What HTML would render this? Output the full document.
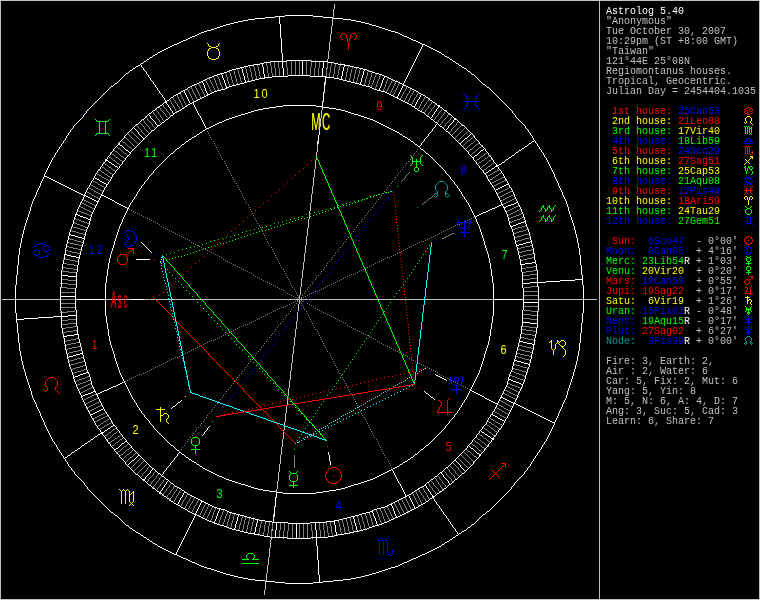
<!DOCTYPE html>
<html lang="en"><head><meta charset="utf-8"><title>Astrolog 5.40</title>
<style>
html,body{margin:0;padding:0;background:#000;}
body{width:760px;height:600px;position:relative;overflow:hidden;}
svg{position:absolute;left:0;top:0;will-change:transform;}
svg path{fill:none;stroke-width:1;shape-rendering:crispEdges;}
.hn{font-family:"Liberation Sans",sans-serif;font-size:12.5px;text-anchor:middle;letter-spacing:2px;}
.lb{font-family:"Liberation Sans",sans-serif;font-size:23.6px;stroke-width:0.15px;vector-effect:non-scaling-stroke;}
pre{position:absolute;left:606px;top:7px;margin:0;font-family:"Liberation Mono",monospace;font-size:10px;line-height:10px;color:#c0c0c0;white-space:pre;will-change:transform;}
</style></head><body>
<svg width="760" height="600" viewBox="0 0 760 600">
<path stroke="#c0c0c0" d="M2 299.5h13M16 299.5h44M106 299.5h25M144 299.5h5M150 299.5h5M156 299.5h15M172 299.5h23M196 299.5h5M202 299.5h97M300 299.5h8M309 299.5h68M378 299.5h14M393 299.5h31M425 299.5h68M539 299.5h44M584 299.5h13M327 59.5h1M327 60.5h1M326 68.5h1M324 92.5h1M322 101.5h1M317 151.5h1M316 158.5h1M316 159.5h1M287 397.5h1M283 430.5h1M276 497.5h1M274 506.5h1M272 529.5h1M272 530.5h1M271 538.5h1M271 539.5h1M1 0.5h598M600 0.5h159M1 599.5h598M600 599.5h159M264.5 590v5M265.5 582v8M266.5 573v8M267.5 565v8M268.5 557v8M269.5 548v9M270.5 540v8M273.5 514v3M276.5 489v3M277.5 481v8M278.5 472v9M279.5 464v8M280.5 455v9M281.5 447v8M282.5 439v8M283.5 432v7M284.5 422v3M284.5 426v4M285.5 413v9M286.5 406v7M287.5 399v6M288.5 388v8M289.5 380v8M290.5 371v9M291.5 363v8M292.5 354v9M293.5 346v8M294.5 337v9M295.5 329v8M296.5 321v8M297.5 312v9M298.5 304v7M300.5 287v8M301.5 278v9M302.5 270v8M303.5 262v8M304.5 253v9M305.5 245v8M306.5 236v9M307.5 228v8M309.5 211v8M310.5 203v8M311.5 194v9M312.5 186v8M313.5 177v9M314.5 169v8M315.5 160v9M316.5 152v4M317.5 145v5M318.5 141v3M319.5 127v5M320.5 118v9M321.5 110v8M322.5 107v3M325.5 82v3M328.5 51v8M329.5 42v9M330.5 34v8M331.5 26v8M332.5 18v8M333.5 9v8M334.5 4v5M308.5 219v9M299.5 295v4M299.5 300v4M0.5 0v600M599.5 0v600M759.5 0v600"/>
<path stroke="#ffffff" d="M76 299.5h29M131 299.5h13M494 299.5h29M265 17.5h10M323 17.5h10M144 61.5h2M270 61.5h12M283 61.5h4M311 61.5h12M324 61.5h4M414 61.5h1M453 61.5h2M144 537.5h2M184 537.5h1M270 537.5h5M276 537.5h11M311 537.5h5M317 537.5h11M453 537.5h2M265 581.5h10M323 581.5h10M102 95.5h1M162 95.5h1M174 95.5h2M186 95.5h1M206 95.5h1M391 95.5h2M398 95.5h1M420 95.5h1M423 95.5h2M496 95.5h1M103 94.5h1M161 94.5h1M176 94.5h2M185 94.5h1M208 94.5h2M389 94.5h2M398 94.5h1M421 94.5h2M495 94.5h1M104 93.5h1M160 93.5h1M178 93.5h2M185 93.5h1M210 93.5h2M387 93.5h2M399 93.5h1M419 93.5h2M494 93.5h1M105 92.5h1M159 92.5h1M180 92.5h1M206 92.5h1M212 92.5h2M385 92.5h2M399 92.5h1M418 92.5h1M493 92.5h1M106 91.5h1M159 91.5h1M181 91.5h2M206 91.5h1M214 91.5h3M381 91.5h4M400 91.5h1M416 91.5h2M492 91.5h1M107 90.5h1M158 90.5h1M183 90.5h1M217 90.5h4M377 90.5h2M380 90.5h1M400 90.5h1M414 90.5h2M491 90.5h1M108 89.5h1M157 89.5h1M185 89.5h2M221 89.5h4M374 89.5h3M401 89.5h1M412 89.5h2M490 89.5h1M109 88.5h1M157 88.5h1M187 88.5h1M225 88.5h1M372 88.5h2M401 88.5h1M410 88.5h2M489 88.5h1M110 87.5h1M156 87.5h1M188 87.5h2M227 87.5h2M370 87.5h2M380 87.5h1M402 87.5h1M408 87.5h2M487 87.5h2M111 86.5h2M155 86.5h1M190 86.5h2M229 86.5h3M366 86.5h4M380 86.5h1M402 86.5h1M406 86.5h2M486 86.5h1M117 82.5h1M153 82.5h1M199 82.5h2M202 82.5h1M244 82.5h1M246 82.5h1M351 82.5h4M398 82.5h2M404 82.5h1M481 82.5h1M118 81.5h1M152 81.5h1M201 81.5h2M247 81.5h4M347 81.5h4M395 81.5h3M404 81.5h1M480 81.5h1M120 79.5h1M150 79.5h1M205 79.5h2M223 79.5h1M255 79.5h4M339 79.5h2M342 79.5h1M383 79.5h1M391 79.5h2M405 79.5h1M478 79.5h1M122 77.5h1M149 77.5h1M209 77.5h3M265 77.5h7M326 77.5h8M384 77.5h1M387 77.5h2M406 77.5h1M476 77.5h1M121 78.5h1M150 78.5h1M207 78.5h2M223 78.5h1M259 78.5h5M334 78.5h5M383 78.5h1M389 78.5h2M406 78.5h1M477 78.5h1M123 76.5h1M148 76.5h1M212 76.5h2M272 76.5h11M284 76.5h4M310 76.5h12M323 76.5h2M384 76.5h3M407 76.5h1M475 76.5h1M125 74.5h1M147 74.5h1M217 74.5h3M221 74.5h1M379 74.5h3M408 74.5h1M472 74.5h2M126 73.5h2M146 73.5h1M220 73.5h4M375 73.5h4M408 73.5h1M471 73.5h1M128 72.5h1M146 72.5h1M224 72.5h3M372 72.5h3M409 72.5h1M470 72.5h1M130 70.5h2M144 70.5h1M229 70.5h3M364 70.5h1M367 70.5h2M410 70.5h1M467 70.5h1M132 69.5h1M143 69.5h1M232 69.5h4M363 69.5h4M410 69.5h1M466 69.5h1M133 68.5h2M143 68.5h1M236 68.5h4M241 68.5h1M359 68.5h4M411 68.5h1M464 68.5h2M135 67.5h1M142 67.5h1M240 67.5h4M354 67.5h5M411 67.5h1M462 67.5h2M136 66.5h2M141 66.5h1M244 66.5h4M350 66.5h4M412 66.5h1M461 66.5h1M138 65.5h2M141 65.5h1M248 65.5h6M345 65.5h5M412 65.5h1M459 65.5h2M140 64.5h1M254 64.5h6M338 64.5h6M413 64.5h1M458 64.5h1M141 63.5h2M260 63.5h2M263 63.5h1M334 63.5h4M413 63.5h1M456 63.5h2M143 62.5h1M264 62.5h6M328 62.5h6M414 62.5h1M455 62.5h1M146 60.5h1M287 60.5h15M303 60.5h8M415 60.5h1M452 60.5h1M114 84.5h1M154 84.5h1M194 84.5h3M203 84.5h1M236 84.5h4M359 84.5h1M361 84.5h1M402 84.5h1M483 84.5h2M115 83.5h2M153 83.5h1M197 83.5h2M203 83.5h1M240 83.5h4M355 83.5h4M400 83.5h2M482 83.5h1M94 103.5h1M163 103.5h1M190 103.5h2M407 103.5h2M416 103.5h1M435 103.5h1M504 103.5h1M95 102.5h1M164 102.5h1M189 102.5h1M192 102.5h1M405 102.5h2M416 102.5h1M433 102.5h2M503 102.5h1M96 101.5h1M189 101.5h1M194 101.5h2M403 101.5h2M417 101.5h1M432 101.5h1M502 101.5h1M97 100.5h1M167 100.5h2M188 100.5h1M196 100.5h2M401 100.5h2M417 100.5h1M430 100.5h2M501 100.5h1M98 99.5h1M164 99.5h1M169 99.5h1M188 99.5h1M198 99.5h2M399 99.5h2M418 99.5h1M429 99.5h1M500 99.5h1M99 98.5h1M164 98.5h1M170 98.5h1M187 98.5h1M200 98.5h2M398 98.5h1M419 98.5h1M428 98.5h1M499 98.5h1M100 97.5h1M163 97.5h1M171 97.5h2M187 97.5h1M202 97.5h2M395 97.5h2M419 97.5h1M426 97.5h2M498 97.5h1M101 96.5h1M162 96.5h1M173 96.5h1M186 96.5h1M204 96.5h2M393 96.5h2M420 96.5h1M425 96.5h1M497 96.5h1M85 113.5h1M149 113.5h2M173 113.5h2M198 113.5h1M245 113.5h3M351 113.5h3M424 113.5h1M434 113.5h1M448 113.5h1M513 113.5h1M86 112.5h1M151 112.5h1M172 112.5h1M175 112.5h2M197 112.5h1M248 112.5h3M348 112.5h3M422 112.5h2M434 112.5h1M447 112.5h1M512 112.5h1M86 111.5h1M152 111.5h1M172 111.5h1M177 111.5h2M197 111.5h1M251 111.5h3M345 111.5h3M420 111.5h2M435 111.5h1M446 111.5h1M512 111.5h1M87 110.5h1M153 110.5h2M171 110.5h1M179 110.5h2M196 110.5h1M254 110.5h4M341 110.5h4M418 110.5h2M436 110.5h1M444 110.5h2M511 110.5h1M88 109.5h1M155 109.5h1M170 109.5h1M181 109.5h1M196 109.5h1M258 109.5h5M336 109.5h5M417 109.5h1M436 109.5h1M443 109.5h1M510 109.5h1M89 108.5h1M156 108.5h1M170 108.5h1M182 108.5h2M195 108.5h1M263 108.5h6M329 108.5h7M415 108.5h2M437 108.5h1M442 108.5h1M509 108.5h1M90 107.5h1M157 107.5h2M169 107.5h1M184 107.5h1M195 107.5h1M269 107.5h7M323 107.5h6M414 107.5h1M440 107.5h2M508 107.5h1M91 106.5h1M159 106.5h1M168 106.5h1M185 106.5h2M194 106.5h1M276 106.5h7M316 106.5h6M412 106.5h3M439 106.5h1M507 106.5h1M92 105.5h1M160 105.5h2M168 105.5h1M187 105.5h1M194 105.5h1M283 105.5h33M411 105.5h1M415 105.5h1M437 105.5h1M439 105.5h1M506 105.5h1M93 104.5h1M162 104.5h1M167 104.5h1M188 104.5h2M409 104.5h2M415 104.5h1M436 104.5h1M505 104.5h1M74 125.5h1M135 125.5h1M157 125.5h3M204 125.5h1M213 125.5h2M383 125.5h2M435 125.5h1M439 125.5h1M449 125.5h1M462 125.5h2M524 125.5h1M75 124.5h1M136 124.5h2M156 124.5h1M160 124.5h1M204 124.5h1M215 124.5h2M381 124.5h2M436 124.5h1M438 124.5h1M450 124.5h1M461 124.5h1M523 124.5h1M76 123.5h1M138 123.5h1M155 123.5h1M161 123.5h1M203 123.5h1M217 123.5h2M379 123.5h2M437 123.5h1M451 123.5h1M460 123.5h1M522 123.5h1M77 122.5h1M139 122.5h1M155 122.5h1M162 122.5h2M203 122.5h1M219 122.5h3M377 122.5h2M435 122.5h2M452 122.5h1M459 122.5h1M521 122.5h1M78 121.5h1M140 121.5h1M154 121.5h1M164 121.5h1M202 121.5h1M222 121.5h2M375 121.5h2M434 121.5h1M453 121.5h1M458 121.5h1M520 121.5h1M79 120.5h1M141 120.5h1M153 120.5h1M165 120.5h1M202 120.5h1M224 120.5h2M373 120.5h2M433 120.5h1M453 120.5h1M457 120.5h1M519 120.5h1M80 119.5h1M142 119.5h2M152 119.5h1M166 119.5h2M201 119.5h1M226 119.5h3M370 119.5h3M431 119.5h2M454 119.5h3M518 119.5h1M81 118.5h1M144 118.5h1M151 118.5h1M168 118.5h1M201 118.5h1M229 118.5h3M367 118.5h3M430 118.5h1M454 118.5h2M517 118.5h1M82 117.5h1M145 117.5h1M150 117.5h1M169 117.5h1M200 117.5h1M232 117.5h3M364 117.5h3M429 117.5h1M431 117.5h1M453 117.5h1M516 117.5h1M83 116.5h1M146 116.5h1M150 116.5h1M170 116.5h1M200 116.5h1M235 116.5h3M361 116.5h3M427 116.5h2M432 116.5h1M452 116.5h1M515 116.5h1M83 115.5h1M147 115.5h1M149 115.5h1M171 115.5h2M199 115.5h1M238 115.5h3M358 115.5h3M426 115.5h1M432 115.5h1M451 115.5h1M515 115.5h1M84 114.5h1M148 114.5h1M173 114.5h1M198 114.5h1M241 114.5h4M354 114.5h4M425 114.5h1M433 114.5h1M449 114.5h2M514 114.5h1M65 138.5h1M123 138.5h1M143 138.5h2M191 138.5h1M407 138.5h1M425 138.5h1M454 138.5h1M465 138.5h2M475 138.5h1M533 138.5h1M66 137.5h1M124 137.5h1M142 137.5h1M145 137.5h1M192 137.5h2M405 137.5h2M426 137.5h1M453 137.5h1M467 137.5h1M474 137.5h1M532 137.5h1M66 136.5h1M124 136.5h1M141 136.5h1M146 136.5h1M194 136.5h2M403 136.5h2M427 136.5h1M452 136.5h1M468 136.5h1M474 136.5h1M532 136.5h1M67 135.5h1M125 135.5h1M140 135.5h1M147 135.5h1M196 135.5h1M402 135.5h1M428 135.5h1M451 135.5h1M469 135.5h1M473 135.5h1M531 135.5h1M68 134.5h1M126 134.5h1M139 134.5h1M148 134.5h1M197 134.5h2M400 134.5h2M428 134.5h1M450 134.5h1M470 134.5h1M472 134.5h1M530 134.5h1M68 133.5h1M127 133.5h1M138 133.5h1M149 133.5h1M199 133.5h1M399 133.5h1M429 133.5h1M449 133.5h1M471 133.5h1M530 133.5h1M69 132.5h1M128 132.5h1M138 132.5h1M150 132.5h1M200 132.5h2M397 132.5h2M430 132.5h1M448 132.5h1M470 132.5h1M529 132.5h1M70 131.5h1M129 131.5h1M137 131.5h1M151 131.5h1M202 131.5h1M395 131.5h2M431 131.5h1M446 131.5h2M469 131.5h1M528 131.5h1M70 130.5h1M130 130.5h1M136 130.5h1M152 130.5h2M203 130.5h2M393 130.5h2M432 130.5h1M445 130.5h1M468 130.5h1M528 130.5h1M71 129.5h1M131 129.5h1M135 129.5h1M154 129.5h1M205 129.5h1M391 129.5h2M432 129.5h1M444 129.5h1M446 129.5h1M467 129.5h1M527 129.5h1M72 128.5h1M132 128.5h1M134 128.5h1M155 128.5h1M206 128.5h3M389 128.5h2M433 128.5h1M443 128.5h1M447 128.5h1M466 128.5h1M526 128.5h1M73 127.5h1M133 127.5h1M156 127.5h1M205 127.5h1M209 127.5h2M387 127.5h2M434 127.5h1M442 127.5h1M448 127.5h1M465 127.5h1M525 127.5h1M64 140.5h1M121 140.5h1M142 140.5h1M188 140.5h1M410 140.5h1M424 140.5h1M456 140.5h1M463 140.5h1M477 140.5h1M534 140.5h1M56 152.5h1M111 152.5h1M129 152.5h2M173 152.5h1M425 152.5h1M468 152.5h1M479 152.5h1M487 152.5h1M516 152.5h2M542 152.5h1M57 151.5h1M112 151.5h1M128 151.5h1M131 151.5h1M174 151.5h1M424 151.5h1M467 151.5h1M480 151.5h1M486 151.5h1M518 151.5h1M541 151.5h1M57 150.5h1M113 150.5h1M126 150.5h2M132 150.5h1M175 150.5h1M423 150.5h1M466 150.5h1M481 150.5h2M485 150.5h1M519 150.5h2M541 150.5h1M58 149.5h1M113 149.5h1M125 149.5h1M133 149.5h1M176 149.5h1M421 149.5h2M465 149.5h1M483 149.5h1M485 149.5h1M521 149.5h1M540 149.5h1M59 148.5h1M114 148.5h1M124 148.5h1M134 148.5h1M177 148.5h2M420 148.5h1M464 148.5h1M484 148.5h1M522 148.5h2M539 148.5h1M59 147.5h1M115 147.5h1M123 147.5h1M135 147.5h1M179 147.5h1M463 147.5h1M483 147.5h1M524 147.5h1M539 147.5h1M60 146.5h1M116 146.5h1M122 146.5h1M136 146.5h1M180 146.5h1M418 146.5h2M462 146.5h1M482 146.5h1M525 146.5h2M538 146.5h1M61 145.5h1M117 145.5h1M120 145.5h2M137 145.5h1M181 145.5h1M417 145.5h1M420 145.5h1M461 145.5h1M481 145.5h1M527 145.5h1M537 145.5h1M62 143.5h1M118 143.5h1M139 143.5h1M184 143.5h1M414 143.5h1M421 143.5h1M459 143.5h2M479 143.5h1M529 143.5h2M536 143.5h1M54 156.5h1M108 156.5h1M127 156.5h1M168 156.5h1M430 156.5h1M471 156.5h1M474 156.5h1M490 156.5h1M511 156.5h1M544 156.5h1M48 167.5h1M100 167.5h1M117 167.5h1M119 167.5h1M157 167.5h1M441 167.5h1M479 167.5h1M494 167.5h1M498 167.5h1M550 167.5h1M48 166.5h1M101 166.5h1M115 166.5h2M119 166.5h1M158 166.5h1M440 166.5h1M479 166.5h1M495 166.5h1M497 166.5h1M550 166.5h1M49 165.5h1M102 165.5h1M114 165.5h1M120 165.5h1M159 165.5h1M439 165.5h1M478 165.5h1M497 165.5h2M549 165.5h1M49 164.5h1M102 164.5h1M112 164.5h2M121 164.5h1M160 164.5h1M438 164.5h1M477 164.5h1M499 164.5h2M549 164.5h1M50 163.5h1M103 163.5h1M111 163.5h1M122 163.5h1M161 163.5h1M437 163.5h1M476 163.5h1M495 163.5h1M501 163.5h1M548 163.5h1M50 162.5h1M104 162.5h1M109 162.5h2M122 162.5h1M162 162.5h1M436 162.5h1M476 162.5h1M494 162.5h1M502 162.5h2M548 162.5h1M51 161.5h1M108 161.5h1M123 161.5h1M163 161.5h1M435 161.5h1M475 161.5h1M493 161.5h1M504 161.5h1M547 161.5h1M51 160.5h1M106 160.5h2M124 160.5h1M164 160.5h1M434 160.5h1M474 160.5h1M493 160.5h1M505 160.5h1M547 160.5h1M46 171.5h1M97 171.5h1M115 171.5h1M153 171.5h1M445 171.5h1M483 171.5h1M488 171.5h1M501 171.5h1M552 171.5h1M45 173.5h1M96 173.5h1M114 173.5h1M152 173.5h1M446 173.5h1M484 173.5h2M502 173.5h1M553 173.5h1M59 183.5h2M90 183.5h1M104 183.5h2M108 183.5h1M144 183.5h1M454 183.5h1M490 183.5h1M508 183.5h1M41 182.5h1M57 182.5h2M91 182.5h1M102 182.5h2M108 182.5h1M144 182.5h1M454 182.5h1M490 182.5h1M507 182.5h1M557 182.5h1M41 181.5h1M55 181.5h2M91 181.5h1M100 181.5h2M109 181.5h1M145 181.5h1M453 181.5h1M489 181.5h1M507 181.5h1M557 181.5h1M42 180.5h1M53 180.5h2M92 180.5h1M99 180.5h1M110 180.5h1M146 180.5h1M452 180.5h1M488 180.5h1M506 180.5h1M556 180.5h1M42 179.5h1M51 179.5h2M93 179.5h1M97 179.5h2M110 179.5h1M147 179.5h1M451 179.5h1M488 179.5h1M505 179.5h1M556 179.5h1M43 178.5h1M49 178.5h2M93 178.5h1M95 178.5h2M111 178.5h1M148 178.5h1M450 178.5h1M487 178.5h1M505 178.5h1M555 178.5h1M43 177.5h1M47 177.5h2M94 177.5h1M111 177.5h1M148 177.5h1M450 177.5h1M487 177.5h1M504 177.5h1M555 177.5h1M61 184.5h2M90 184.5h1M107 184.5h1M143 184.5h1M455 184.5h1M491 184.5h1M506 184.5h3M39 187.5h1M67 187.5h2M88 187.5h1M105 187.5h1M141 187.5h1M457 187.5h1M493 187.5h1M500 187.5h2M510 187.5h1M559 187.5h1M37 191.5h1M75 191.5h2M86 191.5h1M103 191.5h1M138 191.5h1M460 191.5h1M495 191.5h1M512 191.5h1M561 191.5h1M81 201.5h1M96 201.5h1M98 201.5h1M114 201.5h1M132 201.5h1M466 201.5h1M500 201.5h1M517 201.5h1M33 200.5h1M82 200.5h1M94 200.5h2M98 200.5h1M112 200.5h2M132 200.5h1M466 200.5h1M500 200.5h1M516 200.5h1M565 200.5h1M33 199.5h1M82 199.5h1M92 199.5h2M99 199.5h1M110 199.5h2M133 199.5h1M465 199.5h1M499 199.5h1M516 199.5h1M565 199.5h1M34 198.5h1M83 198.5h1M90 198.5h2M99 198.5h1M108 198.5h2M134 198.5h1M464 198.5h1M499 198.5h1M515 198.5h1M564 198.5h1M34 197.5h1M83 197.5h1M88 197.5h2M100 197.5h1M106 197.5h2M134 197.5h1M464 197.5h1M498 197.5h1M515 197.5h1M564 197.5h1M35 196.5h1M86 196.5h2M100 196.5h1M104 196.5h2M135 196.5h1M463 196.5h1M498 196.5h1M563 196.5h1M35 195.5h1M83 195.5h1M85 195.5h1M101 195.5h3M136 195.5h1M462 195.5h1M497 195.5h1M563 195.5h1M81 202.5h1M115 202.5h2M131 202.5h1M467 202.5h1M516 202.5h2M92 212.5h1M126 212.5h1M472 212.5h1M483 212.5h3M506 212.5h1M522 212.5h1M79 206.5h1M95 206.5h1M123 206.5h2M129 206.5h1M469 206.5h1M497 206.5h2M503 206.5h1M506 206.5h2M519 206.5h1M88 219.5h2M86 218.5h2M123 218.5h1M475 218.5h1M83 217.5h3M123 217.5h1M475 217.5h1M80 216.5h3M124 216.5h1M474 216.5h1M476 216.5h1M78 215.5h2M124 215.5h1M474 215.5h1M477 215.5h2M77 214.5h1M125 214.5h1M473 214.5h1M479 214.5h2M82 238.5h2M78 237.5h4M75 236.5h3M71 235.5h4M70 234.5h1M76 257.5h3M71 256.5h5M67 255.5h4M66 254.5h1M68 276.5h8M62 275.5h6M61 296.5h14M68 315.5h8M53 316.5h8M62 316.5h6M74 334.5h3M67 335.5h7M64 336.5h3M80 353.5h2M76 354.5h4M73 355.5h3M69 356.5h4M68 357.5h1M86 372.5h1M88 372.5h1M510 372.5h1M83 373.5h3M88 373.5h1M120 373.5h1M478 373.5h1M510 373.5h1M80 374.5h3M120 374.5h1M435 374.5h1M478 374.5h1M78 375.5h2M121 375.5h1M436 375.5h2M477 375.5h1M75 376.5h3M121 376.5h1M438 376.5h2M477 376.5h1M74 377.5h1M122 377.5h1M440 377.5h2M476 377.5h1M78 389.5h1M107 389.5h2M128 389.5h1M470 389.5h1M504 389.5h1M520 389.5h1M80 393.5h1M88 393.5h3M96 393.5h1M98 393.5h2M130 393.5h1M426 393.5h2M468 393.5h1M476 393.5h2M502 393.5h1M518 393.5h1M79 391.5h1M93 391.5h1M95 391.5h1M102 391.5h2M129 391.5h1M424 391.5h1M469 391.5h1M472 391.5h2M503 391.5h1M519 391.5h1M79 392.5h1M91 392.5h2M95 392.5h1M100 392.5h2M129 392.5h1M425 392.5h1M469 392.5h1M474 392.5h2M503 392.5h1M519 392.5h1M80 394.5h1M85 394.5h3M96 394.5h1M130 394.5h1M428 394.5h1M468 394.5h1M478 394.5h2M502 394.5h1M518 394.5h1M83 395.5h2M131 395.5h1M429 395.5h1M467 395.5h1M480 395.5h2M82 396.5h1M131 396.5h1M430 396.5h1M467 396.5h1M482 396.5h2M34 400.5h1M83 400.5h1M99 400.5h1M134 400.5h1M181 400.5h1M464 400.5h1M489 400.5h2M499 400.5h1M507 400.5h2M515 400.5h1M564 400.5h1M85 404.5h1M101 404.5h1M136 404.5h1M176 404.5h1M462 404.5h1M497 404.5h1M516 404.5h2M39 411.5h1M88 411.5h1M97 411.5h2M105 411.5h1M141 411.5h1M457 411.5h1M493 411.5h1M510 411.5h1M530 411.5h2M559 411.5h1M37 408.5h1M87 408.5h1M103 408.5h1M139 408.5h1M171 408.5h1M459 408.5h1M495 408.5h1M511 408.5h1M524 408.5h2M561 408.5h1M38 409.5h1M87 409.5h1M101 409.5h2M104 409.5h1M139 409.5h1M459 409.5h1M494 409.5h1M511 409.5h1M526 409.5h2M560 409.5h1M38 410.5h1M88 410.5h1M99 410.5h2M104 410.5h1M140 410.5h1M458 410.5h1M494 410.5h1M510 410.5h1M528 410.5h2M560 410.5h1M39 412.5h1M89 412.5h1M95 412.5h2M106 412.5h1M141 412.5h1M457 412.5h1M509 412.5h1M532 412.5h2M559 412.5h1M89 413.5h1M93 413.5h2M106 413.5h1M142 413.5h1M456 413.5h1M509 413.5h1M534 413.5h2M90 414.5h3M107 414.5h1M143 414.5h1M455 414.5h1M491 414.5h1M508 414.5h1M536 414.5h2M90 415.5h1M108 415.5h1M144 415.5h1M454 415.5h1M490 415.5h1M493 415.5h2M508 415.5h1M538 415.5h2M94 422.5h1M112 422.5h1M149 422.5h1M449 422.5h1M486 422.5h1M504 422.5h1M552 422.5h2M45 426.5h1M97 426.5h1M111 426.5h2M115 426.5h1M153 426.5h1M209 426.5h1M445 426.5h1M483 426.5h1M501 426.5h1M553 426.5h1M47 429.5h1M99 429.5h1M107 429.5h1M117 429.5h1M155 429.5h1M207 429.5h1M443 429.5h1M481 429.5h1M499 429.5h1M551 429.5h1M45 425.5h1M96 425.5h1M113 425.5h2M152 425.5h1M446 425.5h1M484 425.5h1M502 425.5h1M553 425.5h1M46 427.5h1M97 427.5h1M110 427.5h1M116 427.5h1M153 427.5h1M208 427.5h1M445 427.5h1M482 427.5h1M501 427.5h1M552 427.5h1M46 428.5h1M98 428.5h1M108 428.5h2M116 428.5h1M154 428.5h1M207 428.5h1M444 428.5h1M482 428.5h1M500 428.5h1M552 428.5h1M47 430.5h1M100 430.5h1M105 430.5h2M118 430.5h1M156 430.5h1M206 430.5h1M442 430.5h1M480 430.5h1M498 430.5h1M551 430.5h1M48 431.5h1M100 431.5h1M104 431.5h1M119 431.5h1M157 431.5h1M205 431.5h1M441 431.5h1M479 431.5h1M481 431.5h1M498 431.5h1M550 431.5h1M48 432.5h1M101 432.5h1M103 432.5h1M119 432.5h1M158 432.5h1M204 432.5h1M440 432.5h1M479 432.5h1M482 432.5h2M497 432.5h1M550 432.5h1M49 433.5h1M100 433.5h2M120 433.5h1M159 433.5h1M204 433.5h1M439 433.5h1M478 433.5h1M484 433.5h1M496 433.5h1M549 433.5h1M50 436.5h1M95 436.5h2M104 436.5h1M122 436.5h1M162 436.5h1M436 436.5h1M476 436.5h1M488 436.5h2M494 436.5h1M548 436.5h1M56 446.5h1M81 446.5h1M111 446.5h1M119 446.5h1M131 446.5h1M173 446.5h1M425 446.5h1M467 446.5h1M469 446.5h1M487 446.5h1M542 446.5h1M53 441.5h1M88 441.5h2M107 441.5h1M125 441.5h2M167 441.5h1M431 441.5h1M472 441.5h1M491 441.5h1M545 441.5h1M54 442.5h1M87 442.5h1M108 442.5h1M124 442.5h1M127 442.5h1M168 442.5h1M430 442.5h1M471 442.5h1M490 442.5h1M544 442.5h1M54 443.5h1M85 443.5h2M109 443.5h1M122 443.5h2M128 443.5h1M169 443.5h1M429 443.5h1M470 443.5h1M489 443.5h1M544 443.5h1M55 444.5h1M84 444.5h1M110 444.5h1M121 444.5h1M129 444.5h1M170 444.5h1M428 444.5h1M469 444.5h1M488 444.5h1M543 444.5h1M56 445.5h1M82 445.5h2M110 445.5h1M120 445.5h1M130 445.5h1M171 445.5h2M426 445.5h2M468 445.5h1M488 445.5h1M542 445.5h1M57 447.5h1M80 447.5h1M112 447.5h1M118 447.5h1M131 447.5h1M174 447.5h1M424 447.5h1M467 447.5h1M470 447.5h1M486 447.5h1M541 447.5h1M57 448.5h1M78 448.5h2M113 448.5h1M116 448.5h2M132 448.5h1M175 448.5h1M423 448.5h1M466 448.5h1M471 448.5h2M485 448.5h1M541 448.5h1M58 449.5h1M77 449.5h1M114 449.5h2M133 449.5h1M176 449.5h1M421 449.5h2M465 449.5h1M473 449.5h1M484 449.5h1M540 449.5h1M59 450.5h1M75 450.5h2M114 450.5h1M134 450.5h1M177 450.5h2M420 450.5h1M464 450.5h1M474 450.5h1M484 450.5h1M539 450.5h1M63 456.5h1M67 456.5h1M119 456.5h1M137 456.5h1M140 456.5h1M176 456.5h1M185 456.5h1M413 456.5h1M458 456.5h1M535 456.5h1M65 459.5h1M122 459.5h1M134 459.5h1M143 459.5h1M174 459.5h1M189 459.5h2M408 459.5h2M455 459.5h1M476 459.5h1M533 459.5h1M67 462.5h1M125 462.5h1M130 462.5h1M146 462.5h1M171 462.5h1M194 462.5h2M403 462.5h2M452 462.5h1M457 462.5h1M473 462.5h1M531 462.5h1M62 455.5h1M68 455.5h2M119 455.5h1M138 455.5h2M177 455.5h1M184 455.5h1M414 455.5h1M459 455.5h1M480 455.5h1M536 455.5h1M63 457.5h1M65 457.5h2M120 457.5h1M136 457.5h1M141 457.5h1M175 457.5h1M186 457.5h2M411 457.5h2M457 457.5h1M478 457.5h1M535 457.5h1M64 458.5h1M121 458.5h1M135 458.5h1M142 458.5h1M174 458.5h1M188 458.5h1M410 458.5h1M456 458.5h1M477 458.5h1M534 458.5h1M65 460.5h1M123 460.5h1M132 460.5h2M144 460.5h1M173 460.5h1M191 460.5h1M407 460.5h1M454 460.5h2M475 460.5h1M533 460.5h1M66 461.5h1M124 461.5h1M131 461.5h1M145 461.5h1M172 461.5h1M192 461.5h2M405 461.5h2M453 461.5h1M456 461.5h1M474 461.5h1M532 461.5h1M67 463.5h1M125 463.5h1M129 463.5h1M147 463.5h1M170 463.5h1M196 463.5h1M402 463.5h1M451 463.5h1M458 463.5h1M473 463.5h1M531 463.5h1M68 464.5h1M126 464.5h1M128 464.5h1M148 464.5h1M170 464.5h1M197 464.5h2M400 464.5h2M450 464.5h1M459 464.5h1M472 464.5h1M530 464.5h1M68 465.5h1M127 465.5h1M149 465.5h1M169 465.5h1M199 465.5h1M399 465.5h1M449 465.5h1M460 465.5h1M471 465.5h1M530 465.5h1M71 468.5h1M130 468.5h1M152 468.5h2M166 468.5h1M203 468.5h2M393 468.5h2M445 468.5h1M462 468.5h1M468 468.5h1M527 468.5h1M73 471.5h1M133 471.5h1M150 471.5h1M156 471.5h1M164 471.5h1M209 471.5h2M387 471.5h2M393 471.5h1M442 471.5h1M465 471.5h1M525 471.5h1M75 474.5h1M136 474.5h2M148 474.5h1M160 474.5h1M162 474.5h1M215 474.5h2M381 474.5h2M394 474.5h1M438 474.5h1M442 474.5h1M461 474.5h1M523 474.5h1M78 477.5h1M140 477.5h1M145 477.5h1M164 477.5h1M222 477.5h2M375 477.5h2M396 477.5h1M434 477.5h1M444 477.5h1M458 477.5h1M520 477.5h1M71 469.5h1M131 469.5h1M152 469.5h1M154 469.5h1M166 469.5h1M205 469.5h2M391 469.5h1M444 469.5h1M463 469.5h1M467 469.5h1M527 469.5h1M72 470.5h1M132 470.5h1M151 470.5h1M155 470.5h1M165 470.5h1M207 470.5h2M389 470.5h2M392 470.5h1M443 470.5h1M464 470.5h1M466 470.5h1M526 470.5h1M74 472.5h1M134 472.5h1M150 472.5h1M157 472.5h1M163 472.5h1M211 472.5h2M385 472.5h2M393 472.5h1M440 472.5h2M464 472.5h1M524 472.5h1M74 473.5h1M135 473.5h1M149 473.5h1M158 473.5h2M163 473.5h1M213 473.5h2M383 473.5h2M394 473.5h1M439 473.5h1M441 473.5h1M462 473.5h2M524 473.5h1M76 475.5h1M138 475.5h1M147 475.5h1M161 475.5h1M217 475.5h2M379 475.5h2M395 475.5h1M437 475.5h1M443 475.5h1M460 475.5h1M522 475.5h1M77 476.5h1M139 476.5h1M146 476.5h1M162 476.5h2M219 476.5h3M377 476.5h2M395 476.5h1M435 476.5h2M443 476.5h1M459 476.5h1M521 476.5h1M79 478.5h1M141 478.5h1M145 478.5h1M165 478.5h1M224 478.5h2M373 478.5h2M396 478.5h1M433 478.5h1M445 478.5h1M457 478.5h1M519 478.5h1M80 479.5h1M142 479.5h3M166 479.5h2M226 479.5h3M370 479.5h3M397 479.5h1M431 479.5h2M446 479.5h1M455 479.5h2M518 479.5h1M81 480.5h1M143 480.5h2M168 480.5h1M229 480.5h3M367 480.5h3M397 480.5h1M430 480.5h1M447 480.5h1M454 480.5h1M517 480.5h1M83 482.5h1M146 482.5h1M166 482.5h1M170 482.5h1M235 482.5h3M361 482.5h3M398 482.5h1M427 482.5h2M448 482.5h1M452 482.5h1M515 482.5h1M85 485.5h1M149 485.5h2M164 485.5h1M174 485.5h1M245 485.5h3M351 485.5h3M400 485.5h1M424 485.5h2M448 485.5h1M513 485.5h1M89 490.5h1M156 490.5h1M161 490.5h1M182 490.5h2M263 490.5h6M329 490.5h7M403 490.5h1M415 490.5h2M428 490.5h1M442 490.5h1M509 490.5h1M82 481.5h1M145 481.5h1M167 481.5h1M169 481.5h1M232 481.5h3M364 481.5h3M398 481.5h1M429 481.5h1M448 481.5h1M453 481.5h1M516 481.5h1M84 483.5h1M147 483.5h1M166 483.5h1M171 483.5h2M238 483.5h3M358 483.5h3M399 483.5h1M426 483.5h1M449 483.5h1M451 483.5h1M514 483.5h1M84 484.5h1M148 484.5h1M165 484.5h1M173 484.5h1M241 484.5h4M354 484.5h4M400 484.5h1M425 484.5h1M449 484.5h2M514 484.5h1M86 486.5h1M151 486.5h1M164 486.5h1M175 486.5h2M248 486.5h3M348 486.5h3M401 486.5h1M422 486.5h2M426 486.5h1M447 486.5h1M512 486.5h1M87 487.5h1M152 487.5h1M163 487.5h1M177 487.5h2M251 487.5h3M345 487.5h3M401 487.5h1M420 487.5h2M426 487.5h1M446 487.5h1M511 487.5h1M87 488.5h1M153 488.5h2M162 488.5h1M179 488.5h2M254 488.5h4M341 488.5h4M402 488.5h1M418 488.5h2M427 488.5h1M444 488.5h2M511 488.5h1M88 489.5h1M155 489.5h1M162 489.5h1M181 489.5h1M258 489.5h5M336 489.5h5M402 489.5h1M417 489.5h1M428 489.5h1M443 489.5h1M510 489.5h1M92 493.5h1M159 493.5h1M161 493.5h1M183 493.5h1M187 493.5h1M283 493.5h33M404 493.5h1M411 493.5h1M430 493.5h1M437 493.5h2M506 493.5h1M96 497.5h1M166 497.5h1M181 497.5h1M194 497.5h2M403 497.5h2M409 497.5h1M502 497.5h1M101 502.5h1M173 502.5h1M178 502.5h1M204 502.5h2M393 502.5h2M412 502.5h1M425 502.5h1M436 502.5h1M497 502.5h1M91 492.5h1M159 492.5h1M184 492.5h3M277 492.5h6M316 492.5h7M404 492.5h1M412 492.5h2M430 492.5h1M439 492.5h1M507 492.5h1M93 494.5h1M162 494.5h1M183 494.5h1M188 494.5h2M409 494.5h2M431 494.5h1M436 494.5h1M505 494.5h1M94 495.5h1M163 495.5h1M182 495.5h1M190 495.5h2M407 495.5h2M435 495.5h1M504 495.5h1M95 496.5h1M164 496.5h2M182 496.5h1M192 496.5h2M406 496.5h1M409 496.5h1M434 496.5h1M503 496.5h1M97 498.5h1M167 498.5h2M180 498.5h1M196 498.5h2M401 498.5h2M410 498.5h1M430 498.5h2M501 498.5h1M98 499.5h1M169 499.5h1M180 499.5h1M198 499.5h2M399 499.5h2M410 499.5h1M429 499.5h1M434 499.5h1M500 499.5h1M99 500.5h1M170 500.5h1M179 500.5h1M200 500.5h1M397 500.5h2M411 500.5h1M428 500.5h1M434 500.5h1M499 500.5h1M100 501.5h1M171 501.5h2M179 501.5h1M202 501.5h2M395 501.5h2M411 501.5h1M426 501.5h2M435 501.5h1M498 501.5h1M102 503.5h1M174 503.5h2M178 503.5h1M200 503.5h1M206 503.5h2M392 503.5h1M412 503.5h1M423 503.5h2M436 503.5h1M496 503.5h1M103 504.5h1M176 504.5h2M200 504.5h1M208 504.5h2M389 504.5h2M413 504.5h1M421 504.5h2M437 504.5h1M495 504.5h1M105 506.5h1M180 506.5h1M199 506.5h1M212 506.5h2M385 506.5h2M392 506.5h1M418 506.5h1M439 506.5h1M493 506.5h1M107 508.5h1M183 508.5h2M198 508.5h1M217 508.5h2M220 508.5h1M377 508.5h4M415 508.5h1M440 508.5h1M491 508.5h1M109 510.5h1M187 510.5h1M197 510.5h1M225 510.5h2M373 510.5h1M410 510.5h2M441 510.5h1M489 510.5h1M111 512.5h2M190 512.5h2M196 512.5h1M218 512.5h1M229 512.5h3M366 512.5h4M406 512.5h2M443 512.5h1M486 512.5h1M104 505.5h1M178 505.5h2M199 505.5h1M210 505.5h2M387 505.5h2M413 505.5h1M419 505.5h2M438 505.5h1M494 505.5h1M106 507.5h1M181 507.5h2M198 507.5h1M214 507.5h3M381 507.5h4M392 507.5h1M416 507.5h2M439 507.5h1M492 507.5h1M108 509.5h1M185 509.5h2M197 509.5h1M221 509.5h4M374 509.5h3M412 509.5h2M441 509.5h1M490 509.5h1M110 511.5h1M188 511.5h2M196 511.5h1M218 511.5h1M227 511.5h2M370 511.5h2M408 511.5h2M442 511.5h1M487 511.5h2M117 516.5h1M194 516.5h1M199 516.5h2M244 516.5h3M351 516.5h2M354 516.5h1M374 516.5h1M396 516.5h1M398 516.5h2M446 516.5h1M481 516.5h1M118 517.5h1M194 517.5h1M201 517.5h2M247 517.5h4M347 517.5h4M374 517.5h1M395 517.5h3M446 517.5h1M480 517.5h1M120 519.5h1M193 519.5h1M205 519.5h2M215 519.5h1M255 519.5h2M258 519.5h1M339 519.5h4M391 519.5h2M448 519.5h1M478 519.5h1M122 521.5h1M192 521.5h1M209 521.5h3M265 521.5h7M326 521.5h8M387 521.5h2M449 521.5h1M476 521.5h1M121 520.5h1M192 520.5h1M207 520.5h2M215 520.5h1M259 520.5h6M335 520.5h4M389 520.5h2M448 520.5h1M477 520.5h1M125 524.5h1M190 524.5h1M217 524.5h3M377 524.5h1M379 524.5h3M451 524.5h1M472 524.5h2M126 525.5h2M190 525.5h1M220 525.5h4M375 525.5h4M452 525.5h1M471 525.5h1M128 526.5h1M189 526.5h1M224 526.5h3M372 526.5h3M452 526.5h1M470 526.5h1M130 528.5h2M188 528.5h1M229 528.5h3M234 528.5h1M367 528.5h2M454 528.5h1M467 528.5h1M132 529.5h1M188 529.5h1M232 529.5h4M363 529.5h4M455 529.5h1M466 529.5h1M133 530.5h2M187 530.5h1M236 530.5h4M357 530.5h1M359 530.5h4M455 530.5h1M464 530.5h2M135 531.5h1M187 531.5h1M240 531.5h4M354 531.5h5M456 531.5h1M462 531.5h2M136 532.5h2M186 532.5h1M244 532.5h4M350 532.5h4M457 532.5h1M461 532.5h1M138 533.5h2M186 533.5h1M248 533.5h6M344 533.5h6M457 533.5h1M459 533.5h2M140 534.5h1M185 534.5h1M255 534.5h5M338 534.5h6M458 534.5h1M141 535.5h2M185 535.5h1M260 535.5h4M334 535.5h2M337 535.5h1M456 535.5h2M143 536.5h1M184 536.5h1M264 536.5h6M328 536.5h6M455 536.5h1M123 522.5h1M191 522.5h1M212 522.5h2M272 522.5h1M274 522.5h2M277 522.5h11M310 522.5h5M316 522.5h10M384 522.5h3M450 522.5h1M475 522.5h1M146 538.5h1M183 538.5h1M287 538.5h9M297 538.5h14M452 538.5h1M129 527.5h1M189 527.5h1M227 527.5h2M369 527.5h3M453 527.5h1M468 527.5h2M119 518.5h1M193 518.5h1M203 518.5h2M251 518.5h4M343 518.5h4M393 518.5h2M447 518.5h1M479 518.5h1M114 514.5h1M194 514.5h1M196 514.5h1M236 514.5h2M239 514.5h1M359 514.5h3M395 514.5h1M402 514.5h2M444 514.5h1M483 514.5h2M115 515.5h2M197 515.5h2M240 515.5h4M355 515.5h4M395 515.5h1M400 515.5h2M445 515.5h1M482 515.5h1M113 513.5h1M192 513.5h2M232 513.5h4M362 513.5h4M404 513.5h2M443 513.5h1M485 513.5h1M90 491.5h1M157 491.5h2M184 491.5h1M269 491.5h7M323 491.5h6M403 491.5h1M414 491.5h1M429 491.5h1M440 491.5h2M508 491.5h1M69 466.5h1M128 466.5h1M150 466.5h1M168 466.5h1M200 466.5h2M397 466.5h2M448 466.5h1M460 466.5h1M470 466.5h1M529 466.5h1M70 467.5h1M129 467.5h1M151 467.5h1M167 467.5h1M202 467.5h1M395 467.5h2M446 467.5h2M461 467.5h1M469 467.5h1M528 467.5h1M59 451.5h1M74 451.5h1M115 451.5h1M135 451.5h1M419 451.5h1M463 451.5h1M475 451.5h1M483 451.5h1M539 451.5h1M60 452.5h1M72 452.5h2M116 452.5h1M136 452.5h1M179 452.5h2M418 452.5h1M462 452.5h1M476 452.5h1M482 452.5h1M538 452.5h1M61 453.5h1M71 453.5h1M117 453.5h1M137 453.5h1M178 453.5h1M181 453.5h1M417 453.5h1M461 453.5h1M477 453.5h2M481 453.5h1M537 453.5h1M49 434.5h1M98 434.5h2M121 434.5h1M160 434.5h1M203 434.5h1M438 434.5h1M477 434.5h1M485 434.5h2M496 434.5h1M549 434.5h1M50 435.5h1M97 435.5h1M103 435.5h1M122 435.5h1M161 435.5h1M202 435.5h1M437 435.5h1M476 435.5h1M487 435.5h1M495 435.5h1M548 435.5h1M51 437.5h1M94 437.5h1M105 437.5h1M123 437.5h1M163 437.5h1M435 437.5h1M475 437.5h1M490 437.5h1M547 437.5h1M51 438.5h1M93 438.5h1M105 438.5h1M124 438.5h1M164 438.5h1M434 438.5h1M474 438.5h1M491 438.5h2M547 438.5h1M41 416.5h1M91 416.5h1M108 416.5h1M144 416.5h1M454 416.5h1M490 416.5h1M495 416.5h2M507 416.5h1M540 416.5h2M557 416.5h1M41 417.5h1M91 417.5h1M109 417.5h1M145 417.5h1M453 417.5h1M489 417.5h1M497 417.5h1M507 417.5h1M542 417.5h2M557 417.5h1M42 418.5h1M92 418.5h1M110 418.5h1M146 418.5h1M452 418.5h1M488 418.5h1M498 418.5h2M506 418.5h1M544 418.5h2M556 418.5h1M42 419.5h1M93 419.5h1M110 419.5h1M147 419.5h1M451 419.5h1M488 419.5h1M500 419.5h2M505 419.5h1M546 419.5h2M556 419.5h1M43 420.5h1M93 420.5h1M111 420.5h1M148 420.5h1M450 420.5h1M487 420.5h1M502 420.5h2M505 420.5h1M548 420.5h2M555 420.5h1M43 421.5h1M94 421.5h1M111 421.5h1M149 421.5h1M449 421.5h1M487 421.5h1M504 421.5h1M550 421.5h2M555 421.5h1M37 407.5h1M86 407.5h1M103 407.5h1M138 407.5h1M172 407.5h1M460 407.5h1M495 407.5h1M512 407.5h1M522 407.5h2M561 407.5h1M98 397.5h1M132 397.5h1M431 397.5h2M466 397.5h1M484 397.5h1M500 397.5h1M502 397.5h1M33 398.5h1M82 398.5h1M98 398.5h1M132 398.5h1M433 398.5h1M466 398.5h1M485 398.5h2M500 398.5h1M503 398.5h2M516 398.5h1M565 398.5h1M33 399.5h1M82 399.5h1M99 399.5h1M133 399.5h1M434 399.5h1M465 399.5h1M487 399.5h2M499 399.5h1M505 399.5h2M516 399.5h1M565 399.5h1M34 401.5h1M83 401.5h1M100 401.5h1M134 401.5h1M180 401.5h1M464 401.5h1M491 401.5h2M498 401.5h1M509 401.5h2M515 401.5h1M564 401.5h1M35 402.5h1M84 402.5h1M100 402.5h1M135 402.5h1M178 402.5h2M463 402.5h1M493 402.5h2M498 402.5h1M511 402.5h2M514 402.5h1M563 402.5h1M35 403.5h1M84 403.5h1M101 403.5h1M136 403.5h1M177 403.5h1M462 403.5h1M495 403.5h3M514 403.5h2M563 403.5h1M92 386.5h1M113 386.5h3M126 386.5h1M472 386.5h1M506 386.5h1M77 388.5h1M93 388.5h1M109 388.5h2M127 388.5h1M471 388.5h1M505 388.5h1M521 388.5h1M123 379.5h1M444 379.5h2M475 379.5h1M509 379.5h2M123 380.5h1M446 380.5h1M475 380.5h1M511 380.5h2M124 381.5h1M474 381.5h1M513 381.5h3M75 382.5h1M122 382.5h1M124 382.5h1M474 382.5h1M516 382.5h3M523 382.5h1M75 383.5h1M120 383.5h2M125 383.5h1M473 383.5h1M519 383.5h2M523 383.5h1M118 384.5h2M125 384.5h1M473 384.5h1M521 384.5h1M70 368.5h1M528 368.5h1M515 360.5h2M517 361.5h4M521 362.5h3M524 363.5h4M528 364.5h1M520 341.5h3M523 342.5h4M527 343.5h5M532 344.5h1M523 322.5h7M530 323.5h7M524 302.5h14M523 283.5h7M530 282.5h7M538 282.5h8M522 264.5h3M525 263.5h7M532 262.5h3M144 245.5h1M517 245.5h2M143 244.5h1M519 244.5h4M142 243.5h1M523 243.5h3M141 242.5h1M526 242.5h4M530 241.5h1M88 226.5h1M510 226.5h1M512 226.5h1M88 225.5h1M120 225.5h1M478 225.5h1M510 225.5h1M513 225.5h3M120 224.5h1M478 224.5h1M516 224.5h2M121 223.5h1M477 223.5h1M518 223.5h3M121 222.5h1M477 222.5h1M521 222.5h3M524 221.5h1M92 213.5h1M125 213.5h1M473 213.5h1M481 213.5h2M506 213.5h1M522 213.5h1M79 205.5h1M96 205.5h1M121 205.5h2M129 205.5h1M469 205.5h1M499 205.5h2M502 205.5h1M508 205.5h3M519 205.5h1M78 207.5h1M95 207.5h1M125 207.5h2M128 207.5h1M470 207.5h1M495 207.5h2M503 207.5h1M505 207.5h1M520 207.5h1M80 204.5h1M96 204.5h1M119 204.5h2M130 204.5h1M468 204.5h1M502 204.5h1M511 204.5h3M518 204.5h1M80 203.5h1M117 203.5h2M130 203.5h1M468 203.5h1M514 203.5h2M518 203.5h1M37 190.5h1M73 190.5h2M86 190.5h1M103 190.5h1M139 190.5h1M459 190.5h1M495 190.5h1M512 190.5h1M561 190.5h1M38 189.5h1M71 189.5h2M87 189.5h1M104 189.5h1M139 189.5h1M459 189.5h1M494 189.5h1M496 189.5h2M511 189.5h1M560 189.5h1M38 188.5h1M69 188.5h2M87 188.5h1M104 188.5h1M140 188.5h1M458 188.5h1M494 188.5h1M498 188.5h2M511 188.5h1M560 188.5h1M39 186.5h1M65 186.5h2M89 186.5h1M141 186.5h1M457 186.5h1M492 186.5h1M502 186.5h2M509 186.5h1M559 186.5h1M63 185.5h2M89 185.5h1M142 185.5h1M456 185.5h1M492 185.5h1M504 185.5h2M509 185.5h1M45 176.5h2M94 176.5h1M112 176.5h1M149 176.5h1M449 176.5h1M486 176.5h1M504 176.5h1M45 172.5h1M97 172.5h1M115 172.5h1M153 172.5h1M445 172.5h1M483 172.5h1M486 172.5h2M501 172.5h1M553 172.5h1M47 169.5h1M99 169.5h1M117 169.5h1M155 169.5h1M443 169.5h1M481 169.5h1M491 169.5h1M499 169.5h1M551 169.5h1M46 170.5h1M98 170.5h1M116 170.5h1M154 170.5h1M444 170.5h1M482 170.5h1M489 170.5h2M500 170.5h1M552 170.5h1M47 168.5h1M100 168.5h1M118 168.5h1M156 168.5h1M442 168.5h1M480 168.5h1M492 168.5h2M498 168.5h1M551 168.5h1M54 155.5h1M109 155.5h1M128 155.5h1M169 155.5h1M429 155.5h1M470 155.5h1M475 155.5h2M489 155.5h1M512 155.5h2M544 155.5h1M55 154.5h1M110 154.5h1M129 154.5h1M170 154.5h1M428 154.5h1M469 154.5h1M477 154.5h1M488 154.5h1M514 154.5h1M543 154.5h1M55 153.5h1M110 153.5h1M130 153.5h1M171 153.5h2M426 153.5h2M468 153.5h1M478 153.5h1M488 153.5h1M515 153.5h1M543 153.5h1M63 142.5h1M140 142.5h1M185 142.5h1M413 142.5h1M422 142.5h1M458 142.5h1M461 142.5h1M479 142.5h1M531 142.5h1M535 142.5h1M65 139.5h1M122 139.5h1M143 139.5h1M189 139.5h2M408 139.5h2M424 139.5h1M455 139.5h1M464 139.5h1M476 139.5h1M533 139.5h1M63 141.5h1M120 141.5h1M141 141.5h1M186 141.5h2M411 141.5h2M423 141.5h1M457 141.5h1M462 141.5h1M478 141.5h1M532 141.5h2M535 141.5h1M73 126.5h1M134 126.5h1M157 126.5h1M205 126.5h1M211 126.5h2M385 126.5h2M435 126.5h1M440 126.5h2M448 126.5h1M464 126.5h1M525 126.5h1M52 439.5h1M91 439.5h2M106 439.5h1M125 439.5h1M165 439.5h1M433 439.5h1M473 439.5h1M492 439.5h1M546 439.5h1M52 440.5h1M90 440.5h1M107 440.5h1M126 440.5h1M166 440.5h1M432 440.5h1M472 440.5h1M491 440.5h1M546 440.5h1M61 454.5h1M70 454.5h1M118 454.5h1M138 454.5h1M177 454.5h1M182 454.5h2M415 454.5h2M460 454.5h1M480 454.5h1M537 454.5h1M124 523.5h1M191 523.5h1M215 523.5h2M288 523.5h8M297 523.5h13M382 523.5h2M450 523.5h1M474 523.5h1M147 539.5h2M183 539.5h1M450 539.5h2M149 540.5h1M182 540.5h1M449 540.5h1M150 541.5h2M182 541.5h1M447 541.5h2M152 542.5h1M181 542.5h1M445 542.5h2M153 543.5h2M181 543.5h1M444 543.5h1M155 544.5h2M180 544.5h1M442 544.5h2M157 545.5h1M180 545.5h1M441 545.5h1M158 546.5h2M179 546.5h1M439 546.5h2M160 547.5h2M179 547.5h1M437 547.5h2M162 548.5h2M178 548.5h1M435 548.5h2M164 549.5h2M178 549.5h1M433 549.5h2M166 550.5h2M177 550.5h1M431 550.5h2M168 551.5h2M177 551.5h1M429 551.5h2M170 552.5h2M427 552.5h2M172 553.5h2M425 553.5h2M174 554.5h2M422 554.5h3M177 555.5h2M420 555.5h2M179 556.5h2M418 556.5h2M181 557.5h2M416 557.5h2M183 558.5h3M413 558.5h3M186 559.5h2M411 559.5h2M188 560.5h2M409 560.5h2M190 561.5h2M407 561.5h2M192 562.5h3M404 562.5h3M195 563.5h2M402 563.5h2M197 564.5h2M400 564.5h2M199 565.5h2M398 565.5h2M201 566.5h3M395 566.5h3M204 567.5h3M391 567.5h4M207 568.5h4M388 568.5h3M211 569.5h3M385 569.5h3M214 570.5h3M382 570.5h3M217 571.5h3M379 571.5h3M220 572.5h3M376 572.5h3M223 573.5h3M372 573.5h4M226 574.5h4M369 574.5h3M230 575.5h4M365 575.5h4M234 576.5h4M361 576.5h4M238 577.5h5M356 577.5h5M243 578.5h5M351 578.5h5M248 579.5h7M343 579.5h8M255 580.5h10M333 580.5h10M275 582.5h10M313 582.5h6M320 582.5h3M285 583.5h28M52 159.5h1M106 159.5h1M125 159.5h1M165 159.5h1M433 159.5h1M492 159.5h1M506 159.5h2M546 159.5h1M52 158.5h1M107 158.5h1M125 158.5h1M166 158.5h1M432 158.5h1M491 158.5h1M508 158.5h1M546 158.5h1M53 157.5h1M107 157.5h1M126 157.5h1M167 157.5h1M431 157.5h1M472 157.5h1M491 157.5h1M509 157.5h2M545 157.5h1M61 144.5h1M118 144.5h1M138 144.5h1M182 144.5h2M415 144.5h2M421 144.5h1M460 144.5h1M480 144.5h1M528 144.5h1M537 144.5h1M113 85.5h1M155 85.5h1M192 85.5h2M232 85.5h4M362 85.5h4M404 85.5h2M485 85.5h1M119 80.5h1M151 80.5h1M203 80.5h2M251 80.5h4M343 80.5h4M393 80.5h2M405 80.5h1M479 80.5h1M124 75.5h1M148 75.5h1M214 75.5h3M288 75.5h14M303 75.5h7M382 75.5h2M407 75.5h1M474 75.5h1M129 71.5h1M145 71.5h1M227 71.5h2M369 71.5h3M409 71.5h1M468 71.5h2M147 59.5h2M415 59.5h1M450 59.5h2M149 58.5h1M416 58.5h1M449 58.5h1M150 57.5h2M416 57.5h1M447 57.5h2M152 56.5h1M417 56.5h1M445 56.5h2M153 55.5h2M417 55.5h1M444 55.5h1M155 54.5h2M418 54.5h1M442 54.5h2M157 53.5h1M418 53.5h1M441 53.5h1M158 52.5h2M419 52.5h1M439 52.5h2M160 51.5h2M419 51.5h1M437 51.5h2M162 50.5h2M420 50.5h1M435 50.5h2M164 49.5h2M420 49.5h1M433 49.5h2M166 48.5h2M421 48.5h1M431 48.5h2M168 47.5h2M421 47.5h1M429 47.5h2M170 46.5h2M427 46.5h2M172 45.5h2M425 45.5h2M174 44.5h3M423 44.5h2M177 43.5h2M420 43.5h2M179 42.5h2M418 42.5h2M181 41.5h2M416 41.5h2M183 40.5h3M413 40.5h3M186 39.5h2M411 39.5h2M188 38.5h2M409 38.5h2M190 37.5h2M407 37.5h2M192 36.5h3M404 36.5h3M195 35.5h2M402 35.5h2M197 34.5h2M400 34.5h2M199 33.5h2M398 33.5h2M201 32.5h3M395 32.5h3M204 31.5h3M391 31.5h4M207 30.5h4M388 30.5h3M211 29.5h3M385 29.5h3M214 28.5h3M382 28.5h3M217 27.5h3M379 27.5h3M220 26.5h3M376 26.5h3M223 25.5h3M372 25.5h4M226 24.5h4M369 24.5h3M230 23.5h4M365 23.5h4M234 22.5h4M361 22.5h4M238 21.5h5M356 21.5h5M243 20.5h5M351 20.5h5M248 19.5h7M343 19.5h8M255 18.5h10M333 18.5h10M275 16.5h4M280 16.5h5M313 16.5h10M285 15.5h28M70 367.5h1M528 367.5h1M77 387.5h1M93 387.5h1M111 387.5h2M127 387.5h1M471 387.5h1M505 387.5h1M521 387.5h1M78 390.5h1M104 390.5h3M128 390.5h1M470 390.5h2M504 390.5h1M520 390.5h1M86 406.5h1M102 406.5h1M137 406.5h1M173 406.5h2M461 406.5h1M496 406.5h1M512 406.5h1M520 406.5h2M95 423.5h1M112 423.5h1M150 423.5h1M448 423.5h1M486 423.5h1M503 423.5h1M95 424.5h1M113 424.5h1M151 424.5h1M447 424.5h1M485 424.5h1M503 424.5h1M85 405.5h1M102 405.5h1M137 405.5h1M175 405.5h1M461 405.5h1M496 405.5h1M518 405.5h2M71 228.5h1M87 228.5h1M527 228.5h1M71 227.5h1M87 227.5h1M527 227.5h1M78 208.5h1M94 208.5h1M128 208.5h1M470 208.5h1M492 208.5h3M520 208.5h1M79 193.5h2M85 193.5h1M102 193.5h1M137 193.5h1M461 193.5h1M496 193.5h1M513 193.5h1M77 192.5h2M85 192.5h1M102 192.5h1M137 192.5h1M461 192.5h1M496 192.5h1M513 192.5h1M95 175.5h1M112 175.5h1M150 175.5h1M448 175.5h1M486 175.5h1M503 175.5h1M95 174.5h1M113 174.5h1M151 174.5h1M447 174.5h1M485 174.5h1M503 174.5h1M511 370.5h1M511 371.5h1M92 385.5h1M116 385.5h2M126 385.5h1M472 385.5h1M506 385.5h1M93 211.5h1M126 211.5h1M472 211.5h1M486 211.5h2M505 211.5h1M93 210.5h1M471 210.5h1M488 210.5h2M505 210.5h1M94 209.5h1M471 209.5h1M490 209.5h2M81 194.5h2M101 194.5h1M136 194.5h1M462 194.5h1M497 194.5h1M122 378.5h1M442 378.5h2M476 378.5h1M17 319.5h7M24 318.5h14M38 317.5h15M575 279.5h7M560 280.5h15M546 281.5h14M136 259.5h14M151 252.5h1M150 251.5h1M149 250.5h1M148 249.5h1M147 248.5h1M146 247.5h1M145 246.5h1M15.5 285v28M60.5 287v24M75.5 214v3M75.5 288v22M76.5 212v3M76.5 272v16M76.5 310v16M76.5 384v3M77.5 209v3M77.5 265v7M77.5 326v9M78.5 259v6M78.5 334v5M79.5 255v4M79.5 339v4M80.5 251v4M80.5 343v4M81.5 247v4M81.5 347v4M81.5 395v3M82.5 244v3M82.5 351v4M83.5 240v4M83.5 355v4M84.5 194v3M84.5 236v4M84.5 359v3M85.5 232v4M85.5 362v4M86.5 229v3M86.5 366v4M87.5 370v3M89.5 221v4M89.5 374v3M90.5 217v4M90.5 377v4M91.5 214v3M91.5 381v4M94.5 389v3M97.5 201v3M97.5 394v3M102.5 432v3M105.5 159v3M105.5 283v33M493.5 283v33M493.5 437v3M496.5 164v3M501.5 202v3M501.5 395v3M504.5 207v3M507.5 214v3M507.5 381v4M508.5 217v4M508.5 377v4M509.5 221v4M509.5 374v3M511.5 226v3M512.5 229v3M512.5 366v4M513.5 232v4M513.5 362v4M513.5 403v3M514.5 194v3M514.5 236v4M514.5 359v3M515.5 240v4M515.5 355v4M516.5 244v3M516.5 351v4M517.5 247v4M517.5 347v4M517.5 395v3M518.5 251v4M518.5 343v4M519.5 255v4M519.5 339v4M520.5 259v6M520.5 334v5M521.5 209v3M521.5 264v8M521.5 326v8M522.5 272v16M522.5 310v16M522.5 384v3M523.5 214v3M523.5 288v22M538.5 287v24M583.5 285v28M325.5 76v6M324.5 82v10M323.5 61v7M323.5 92v10M322.5 68v9M322.5 102v5M319.5 132v3M319.5 575v8M318.5 135v6M318.5 560v15M317.5 141v4M317.5 546v14M276.5 492v5M276.5 522v8M275.5 497v10M275.5 530v8M274.5 507v10M273.5 517v6M397.5 96v3M403.5 83v3M379.5 88v3M381.5 83v3M382.5 80v3M376.5 521v3M372.5 510v3M360.5 82v3M361.5 78v4M362.5 75v3M363.5 71v4M356.5 526v4M341.5 76v4M342.5 71v5M343.5 67v4M344.5 64v3M335.5 525v7M315.5 522v8M302.5 60v16M283.5 68v9M282.5 53v15M264.5 74v5M263.5 67v7M262.5 63v4M257.5 519v4M245.5 80v3M244.5 76v4M243.5 73v3M242.5 69v4M237.5 517v4M225.5 83v3M226.5 86v3M224.5 80v3M222.5 75v3M205.5 88v3M207.5 93v3M204.5 85v3M184.5 90v3M176.5 552v3M166.5 101v3M165.5 100v3M127.5 208v3M122.5 219v3M119.5 142v3M119.5 226v3M119.5 370v3M118.5 229v3M118.5 367v3M116.5 235v3M116.5 361v3M113.5 245v3M113.5 351v3M108.5 263v6M108.5 329v7M117.5 232v3M117.5 364v3M115.5 238v3M115.5 358v3M114.5 241v4M114.5 354v4M112.5 248v3M112.5 348v3M111.5 251v3M111.5 345v3M110.5 254v4M110.5 341v4M109.5 258v5M109.5 336v5M107.5 269v7M107.5 323v6M106.5 184v3M106.5 276v7M106.5 316v7M74.5 217v3M74.5 379v3M73.5 220v4M73.5 375v4M72.5 224v3M72.5 372v3M70.5 229v3M71.5 369v3M69.5 232v4M69.5 363v4M68.5 236v4M68.5 359v4M67.5 240v4M67.5 354v5M66.5 244v4M66.5 350v4M65.5 248v7M65.5 344v6M64.5 254v6M64.5 338v6M63.5 260v4M63.5 334v4M62.5 264v6M62.5 328v6M61.5 270v17M61.5 311v17M160.5 491v3M201.5 500v3M195.5 513v3M219.5 508v3M217.5 513v3M216.5 516v3M214.5 521v3M238.5 514v3M236.5 521v3M235.5 524v4M256.5 523v4M255.5 527v5M254.5 532v3M279.5 16v8M296.5 523v16M316.5 530v16M328.5 452v3M334.5 520v5M336.5 532v4M353.5 516v3M354.5 519v4M355.5 523v3M373.5 513v3M375.5 518v3M393.5 508v3M391.5 503v3M394.5 511v3M414.5 506v3M422.5 44v3M432.5 495v3M433.5 496v3M473.5 157v3M476.5 219v3M479.5 226v3M479.5 370v3M479.5 454v3M480.5 229v3M480.5 367v3M482.5 235v3M482.5 361v3M490.5 263v6M490.5 329v7M481.5 232v3M481.5 364v3M483.5 238v3M483.5 358v3M484.5 241v4M484.5 354v4M485.5 245v3M485.5 351v3M486.5 248v3M486.5 348v3M487.5 251v3M487.5 345v3M488.5 254v4M488.5 341v4M489.5 258v5M489.5 336v5M491.5 269v7M491.5 323v6M492.5 276v7M492.5 316v7M492.5 412v3M524.5 217v3M524.5 379v3M525.5 220v4M525.5 375v4M526.5 224v3M526.5 372v3M528.5 229v3M527.5 369v3M529.5 232v4M529.5 363v4M530.5 236v4M530.5 359v4M531.5 240v4M531.5 354v5M532.5 244v4M532.5 350v4M533.5 248v6M533.5 344v6M534.5 254v6M534.5 338v7M535.5 260v4M535.5 334v4M536.5 264v6M536.5 328v6M537.5 270v17M537.5 311v17M438.5 105v3M582.5 275v10M582.5 313v10M581.5 265v10M581.5 323v10M580.5 255v10M580.5 333v10M579.5 248v7M579.5 343v8M578.5 243v5M578.5 351v5M577.5 238v5M577.5 356v5M576.5 234v4M576.5 361v4M575.5 230v4M575.5 365v4M574.5 226v4M574.5 369v3M573.5 223v3M573.5 372v4M572.5 220v3M572.5 376v3M571.5 217v3M571.5 379v3M570.5 214v3M570.5 382v3M569.5 211v3M569.5 385v3M568.5 207v4M568.5 388v3M567.5 204v3M567.5 391v4M566.5 201v3M566.5 395v3M562.5 192v3M562.5 404v3M558.5 183v3M558.5 413v3M554.5 174v3M554.5 422v3M405.5 494v3M330.5 461v4M329.5 455v6M281.5 38v15M280.5 24v14M193.5 102v3M44.5 174v3M44.5 422v3M40.5 183v3M40.5 413v3M36.5 192v3M36.5 404v3M32.5 201v3M32.5 395v3M31.5 204v3M31.5 391v4M30.5 207v4M30.5 388v3M29.5 211v3M29.5 385v3M28.5 214v3M28.5 382v3M27.5 217v3M27.5 379v3M26.5 220v3M26.5 376v3M25.5 223v3M25.5 372v4M24.5 226v4M24.5 369v3M23.5 230v4M23.5 365v4M22.5 234v4M22.5 361v4M21.5 238v5M21.5 356v5M20.5 243v5M20.5 351v5M19.5 248v7M19.5 343v8M18.5 255v10M18.5 333v10M17.5 265v10M17.5 323v10M16.5 275v10M16.5 313v10"/>
<path stroke="#808080" d="M61 299.5h14M299 299.5h1M524 299.5h14M177 95.5h1M181 95.5h1M190 95.5h1M195 95.5h1M199 95.5h1M204 95.5h1M393 95.5h1M402 95.5h1M407 95.5h1M411 95.5h1M416 95.5h1M180 94.5h1M190 94.5h1M194 94.5h1M199 94.5h1M204 94.5h1M393 94.5h1M402 94.5h1M407 94.5h1M412 94.5h1M417 94.5h1M180 93.5h1M189 93.5h1M194 93.5h1M198 93.5h1M203 93.5h1M390 93.5h1M394 93.5h1M403 93.5h1M408 93.5h1M412 93.5h1M417 93.5h1M179 92.5h1M189 92.5h1M193 92.5h1M198 92.5h1M203 92.5h1M211 92.5h1M390 92.5h1M394 92.5h1M403 92.5h1M409 92.5h1M413 92.5h1M188 91.5h1M193 91.5h1M197 91.5h1M202 91.5h1M211 91.5h1M386 91.5h1M391 91.5h1M395 91.5h1M404 91.5h1M409 91.5h1M413 91.5h1M188 90.5h1M192 90.5h1M197 90.5h1M202 90.5h1M210 90.5h1M215 90.5h1M383 90.5h1M387 90.5h1M391 90.5h1M395 90.5h1M405 90.5h1M410 90.5h1M187 89.5h1M192 89.5h1M196 89.5h1M201 89.5h1M210 89.5h1M214 89.5h1M218 89.5h1M383 89.5h1M387 89.5h1M392 89.5h1M396 89.5h1M405 89.5h1M410 89.5h1M191 88.5h1M196 88.5h1M201 88.5h1M209 88.5h1M214 88.5h1M218 88.5h1M222 88.5h1M375 88.5h1M384 88.5h1M388 88.5h1M392 88.5h1M396 88.5h1M406 88.5h1M191 87.5h1M195 87.5h1M200 87.5h1M209 87.5h1M213 87.5h1M217 87.5h1M222 87.5h1M375 87.5h1M384 87.5h1M388 87.5h1M393 87.5h1M397 87.5h1M406 87.5h1M195 86.5h1M200 86.5h1M208 86.5h1M213 86.5h1M217 86.5h1M221 86.5h1M371 86.5h1M389 86.5h1M393 86.5h1M397 86.5h1M194 85.5h1M199 85.5h1M208 85.5h1M212 85.5h1M221 85.5h1M229 85.5h1M368 85.5h1M371 85.5h1M389 85.5h1M394 85.5h1M398 85.5h1M199 84.5h1M207 84.5h1M212 84.5h1M229 84.5h1M233 84.5h1M364 84.5h1M368 84.5h1M372 84.5h1M390 84.5h1M394 84.5h1M398 84.5h1M207 83.5h1M211 83.5h1M233 83.5h1M237 83.5h1M364 83.5h1M372 83.5h1M390 83.5h1M395 83.5h1M399 83.5h1M206 82.5h1M211 82.5h1M237 82.5h1M241 82.5h1M356 82.5h1M391 82.5h1M395 82.5h1M205 80.5h1M210 80.5h1M378 80.5h1M387 80.5h1M392 80.5h1M396 80.5h1M206 81.5h1M210 81.5h1M241 81.5h1M356 81.5h1M391 81.5h1M209 79.5h1M214 79.5h1M378 79.5h1M387 79.5h1M209 78.5h1M214 78.5h1M218 78.5h1M388 78.5h1M217 75.5h1M375 75.5h1M380 75.5h1M217 76.5h1M260 76.5h1M375 76.5h1M376 74.5h1M229 71.5h1M368 71.5h1M372 71.5h1M237 69.5h1M356 69.5h1M360 69.5h1M245 68.5h1M352 68.5h1M356 68.5h1M245 67.5h1M249 67.5h1M348 67.5h1M352 67.5h1M249 66.5h1M253 66.5h1M257 66.5h1M348 66.5h1M257 65.5h1M340 65.5h1M340 63.5h1M286 60.5h1M311 60.5h1M315 60.5h1M213 77.5h1M218 77.5h1M260 77.5h1M253 64.5h1M233 70.5h1M229 72.5h1M225 73.5h1M178 97.5h1M182 97.5h1M191 97.5h1M196 97.5h1M200 97.5h1M401 97.5h1M406 97.5h1M410 97.5h1M415 97.5h1M424 97.5h1M177 96.5h1M181 96.5h1M191 96.5h1M195 96.5h1M200 96.5h1M401 96.5h1M406 96.5h1M410 96.5h1M416 96.5h1M173 99.5h1M179 99.5h1M183 99.5h1M192 99.5h1M197 99.5h1M405 99.5h1M409 99.5h1M414 99.5h1M423 99.5h1M428 99.5h1M173 98.5h1M178 98.5h1M182 98.5h1M192 98.5h1M196 98.5h1M400 98.5h1M405 98.5h1M409 98.5h1M414 98.5h1M424 98.5h1M429 98.5h1M170 101.5h1M175 101.5h1M180 101.5h1M184 101.5h1M193 101.5h1M408 101.5h1M413 101.5h1M422 101.5h1M427 101.5h1M170 100.5h1M174 100.5h1M179 100.5h1M183 100.5h1M193 100.5h1M404 100.5h1M408 100.5h1M413 100.5h1M423 100.5h1M428 100.5h1M163 105.5h1M173 105.5h1M177 105.5h1M182 105.5h1M186 105.5h1M420 105.5h1M424 105.5h1M429 105.5h1M434 105.5h1M172 104.5h1M177 104.5h1M181 104.5h1M185 104.5h1M411 104.5h1M420 104.5h1M425 104.5h1M430 104.5h1M435 104.5h1M171 103.5h1M176 103.5h1M181 103.5h1M185 103.5h1M412 103.5h1M421 103.5h1M426 103.5h1M431 103.5h1M436 103.5h1M171 102.5h1M175 102.5h1M180 102.5h1M184 102.5h1M407 102.5h1M412 102.5h1M421 102.5h1M426 102.5h1M431 102.5h1M159 107.5h1M164 107.5h1M174 107.5h1M179 107.5h1M183 107.5h1M419 107.5h1M423 107.5h1M428 107.5h1M433 107.5h1M158 106.5h1M163 106.5h1M173 106.5h1M178 106.5h1M182 106.5h1M419 106.5h1M424 106.5h1M428 106.5h1M434 106.5h1M156 109.5h1M160 109.5h1M166 109.5h1M175 109.5h1M180 109.5h1M422 109.5h1M426 109.5h1M431 109.5h1M441 109.5h1M155 108.5h1M160 108.5h1M165 108.5h1M174 108.5h1M179 108.5h1M418 108.5h1M422 108.5h1M427 108.5h1M432 108.5h1M157 111.5h1M162 111.5h1M167 111.5h1M176 111.5h1M425 111.5h1M430 111.5h1M440 111.5h1M445 111.5h1M156 110.5h1M161 110.5h1M166 110.5h1M175 110.5h1M421 110.5h1M425 110.5h1M431 110.5h1M441 110.5h1M446 110.5h1M155 115.5h1M160 115.5h1M165 115.5h1M170 115.5h1M427 115.5h1M437 115.5h1M442 115.5h1M447 115.5h1M154 114.5h1M159 114.5h1M165 114.5h1M169 114.5h1M428 114.5h1M438 114.5h1M443 114.5h1M448 114.5h1M153 113.5h1M158 113.5h1M164 113.5h1M169 113.5h1M428 113.5h1M438 113.5h1M444 113.5h1M449 113.5h1M153 112.5h1M158 112.5h1M163 112.5h1M168 112.5h1M424 112.5h1M429 112.5h1M439 112.5h1M444 112.5h1M146 117.5h1M156 117.5h1M161 117.5h1M167 117.5h1M435 117.5h1M441 117.5h1M446 117.5h1M451 117.5h1M145 116.5h1M156 116.5h1M160 116.5h1M166 116.5h1M436 116.5h1M441 116.5h1M447 116.5h1M143 120.5h1M148 120.5h1M159 120.5h1M163 120.5h1M438 120.5h1M443 120.5h1M449 120.5h1M147 119.5h1M158 119.5h1M162 119.5h1M434 119.5h1M439 119.5h1M444 119.5h1M450 119.5h1M147 118.5h1M157 118.5h1M162 118.5h1M435 118.5h1M440 118.5h1M445 118.5h1M450 118.5h1M144 122.5h1M150 122.5h1M160 122.5h1M437 122.5h1M442 122.5h1M447 122.5h1M457 122.5h1M144 121.5h1M149 121.5h1M159 121.5h1M438 121.5h1M442 121.5h1M448 121.5h1M138 127.5h1M144 127.5h1M149 127.5h1M154 127.5h1M443 127.5h1M453 127.5h1M459 127.5h1M137 126.5h1M143 126.5h1M148 126.5h1M153 126.5h1M444 126.5h1M454 126.5h1M460 126.5h1M136 125.5h1M142 125.5h1M147 125.5h1M152 125.5h1M445 125.5h1M455 125.5h1M461 125.5h1M141 124.5h1M146 124.5h1M152 124.5h1M440 124.5h1M445 124.5h1M456 124.5h1M462 124.5h1M140 123.5h1M145 123.5h1M151 123.5h1M441 123.5h1M446 123.5h1M456 123.5h1M141 130.5h1M146 130.5h1M151 130.5h1M451 130.5h1M456 130.5h1M462 130.5h1M140 129.5h1M145 129.5h1M150 129.5h1M206 129.5h1M451 129.5h1M457 129.5h1M463 129.5h1M139 128.5h1M144 128.5h1M149 128.5h1M452 128.5h1M458 128.5h1M464 128.5h1M132 132.5h1M142 132.5h1M148 132.5h1M449 132.5h1M454 132.5h1M460 132.5h1M466 132.5h1M131 131.5h1M141 131.5h1M147 131.5h1M207 131.5h1M450 131.5h1M455 131.5h1M461 131.5h1M467 131.5h1M129 135.5h1M135 135.5h1M145 135.5h1M209 135.5h1M457 135.5h1M463 135.5h1M128 134.5h1M134 134.5h1M144 134.5h1M452 134.5h1M458 134.5h1M464 134.5h1M133 133.5h1M143 133.5h1M208 133.5h1M453 133.5h1M459 133.5h1M465 133.5h1M128 140.5h1M134 140.5h1M140 140.5h1M458 140.5h1M468 140.5h2M475 140.5h1M127 139.5h1M133 139.5h1M139 139.5h1M211 139.5h1M459 139.5h1M470 139.5h1M126 138.5h1M132 138.5h1M138 138.5h1M460 138.5h1M471 138.5h1M125 137.5h1M131 137.5h1M137 137.5h1M210 137.5h1M455 137.5h1M461 137.5h1M472 137.5h1M130 136.5h1M136 136.5h1M456 136.5h1M462 136.5h1M473 136.5h1M125 143.5h1M131 143.5h1M137 143.5h1M214 143.5h1M465 143.5h1M471 143.5h2M478 143.5h1M123 142.5h2M130 142.5h1M136 142.5h1M466 142.5h1M473 142.5h1M122 141.5h1M129 141.5h1M135 141.5h1M213 141.5h1M467 141.5h1M474 141.5h1M128 146.5h1M134 146.5h1M468 146.5h1M474 146.5h1M481 146.5h1M127 145.5h1M133 145.5h1M215 145.5h1M463 145.5h1M469 145.5h1M475 145.5h1M482 145.5h1M126 144.5h1M132 144.5h1M464 144.5h1M470 144.5h1M476 144.5h2M120 149.5h1M132 149.5h1M217 149.5h1M417 149.5h1M470 149.5h2M477 149.5h1M118 148.5h2M131 148.5h1M466 148.5h1M472 148.5h1M478 148.5h1M117 147.5h1M129 147.5h2M216 147.5h1M419 147.5h1M467 147.5h1M473 147.5h1M479 147.5h2M114 155.5h1M120 155.5h1M127 155.5h1M220 155.5h1M413 155.5h1M483 155.5h1M490 155.5h1M112 154.5h2M119 154.5h1M126 154.5h1M471 154.5h1M484 154.5h1M111 153.5h1M118 153.5h1M124 153.5h2M219 153.5h1M414 153.5h1M472 153.5h1M485 153.5h2M110 152.5h1M117 152.5h1M123 152.5h1M473 152.5h2M115 151.5h2M122 151.5h1M218 151.5h1M416 151.5h1M468 151.5h1M475 151.5h1M114 150.5h1M121 150.5h1M469 150.5h1M476 150.5h1M111 158.5h1M118 158.5h1M124 158.5h1M479 158.5h1M485 158.5h2M492 158.5h1M109 157.5h2M116 157.5h2M123 157.5h1M221 157.5h1M411 157.5h1M480 157.5h1M487 157.5h1M115 156.5h1M121 156.5h2M481 156.5h2M488 156.5h2M115 161.5h1M122 161.5h1M224 161.5h1M408 161.5h1M481 161.5h1M488 161.5h1M113 160.5h2M120 160.5h2M476 160.5h1M482 160.5h2M489 160.5h2M112 159.5h1M119 159.5h1M222 159.5h1M410 159.5h1M477 159.5h2M484 159.5h1M491 159.5h1M105 164.5h2M119 164.5h1M485 164.5h1M491 164.5h1M104 163.5h1M117 163.5h2M225 163.5h1M406 163.5h1M478 163.5h1M486 163.5h1M492 163.5h2M103 162.5h1M116 162.5h1M479 162.5h2M487 162.5h1M99 170.5h2M106 170.5h2M113 170.5h2M483 170.5h1M497 170.5h2M98 169.5h1M105 169.5h1M112 169.5h1M228 169.5h1M402 169.5h1M484 169.5h2M104 168.5h1M111 168.5h1M486 168.5h1M102 167.5h2M109 167.5h2M227 167.5h1M403 167.5h1M481 167.5h1M487 167.5h1M108 166.5h1M482 166.5h1M488 166.5h2M107 165.5h1M226 165.5h1M405 165.5h1M483 165.5h2M490 165.5h1M97 174.5h2M105 174.5h2M112 174.5h1M407 174.5h1M490 174.5h2M498 174.5h1M104 173.5h1M110 173.5h2M230 173.5h1M398 173.5h1M408 173.5h1M492 173.5h1M499 173.5h2M102 172.5h2M109 172.5h1M409 172.5h1M493 172.5h2M101 171.5h1M108 171.5h1M229 171.5h1M400 171.5h1M495 171.5h2M102 177.5h2M110 177.5h1M232 177.5h1M395 177.5h1M405 177.5h1M493 177.5h2M502 177.5h2M101 176.5h1M108 176.5h2M405 176.5h1M487 176.5h1M495 176.5h1M99 175.5h2M107 175.5h1M231 175.5h1M397 175.5h1M406 175.5h1M488 175.5h2M496 175.5h2M108 180.5h1M402 180.5h1M489 180.5h1M496 180.5h2M504 180.5h2M106 179.5h2M233 179.5h1M394 179.5h1M403 179.5h1M490 179.5h2M498 179.5h2M506 179.5h1M104 178.5h2M404 178.5h1M492 178.5h1M500 178.5h2M95 187.5h1M104 187.5h1M238 187.5h1M387 187.5h1M509 187.5h1M93 186.5h2M102 186.5h2M493 186.5h1M91 185.5h2M100 185.5h2M237 185.5h1M389 185.5h1M494 185.5h2M98 184.5h2M496 184.5h2M97 183.5h1M236 183.5h1M391 183.5h1M491 183.5h1M498 183.5h2M95 182.5h2M492 182.5h2M500 182.5h2M93 181.5h2M234 181.5h1M392 181.5h1M401 181.5h1M494 181.5h2M502 181.5h2M94 191.5h2M102 191.5h1M240 191.5h1M384 191.5h1M501 191.5h2M510 191.5h2M93 190.5h1M100 190.5h2M503 190.5h2M91 189.5h2M98 189.5h2M239 189.5h1M386 189.5h1M505 189.5h2M89 188.5h2M96 188.5h2M507 188.5h2M91 194.5h1M100 194.5h1M504 194.5h2M513 194.5h1M89 193.5h2M98 193.5h2M241 193.5h1M383 193.5h1M497 193.5h2M506 193.5h2M87 192.5h2M96 192.5h2M499 192.5h2M508 192.5h2M98 198.5h1M429 198.5h2M505 198.5h2M514 198.5h1M96 197.5h2M243 197.5h1M380 197.5h1M431 197.5h1M499 197.5h1M507 197.5h2M94 196.5h2M432 196.5h1M500 196.5h2M509 196.5h2M92 195.5h2M242 195.5h1M381 195.5h1M502 195.5h2M511 195.5h2M86 205.5h2M94 205.5h2M248 205.5h1M373 205.5h1M518 205.5h1M84 204.5h2M92 204.5h2M422 204.5h1M503 204.5h1M82 203.5h2M90 203.5h2M246 203.5h1M375 203.5h1M423 203.5h1M504 203.5h2M80 202.5h1M88 202.5h2M424 202.5h2M506 202.5h2M86 201.5h2M245 201.5h1M376 201.5h1M426 201.5h1M508 201.5h2M84 200.5h2M427 200.5h1M501 200.5h2M510 200.5h2M83 199.5h1M244 199.5h1M378 199.5h1M428 199.5h1M503 199.5h2M512 199.5h2M83 208.5h2M92 208.5h2M512 208.5h2M81 207.5h2M90 207.5h2M249 207.5h1M372 207.5h1M514 207.5h2M80 206.5h1M88 206.5h2M516 206.5h2M81 212.5h3M91 212.5h1M135 212.5h1M513 212.5h2M79 211.5h2M89 211.5h2M133 211.5h1M251 211.5h1M368 211.5h1M506 211.5h2M515 211.5h2M78 210.5h1M87 210.5h2M131 210.5h1M508 210.5h2M517 210.5h2M85 209.5h2M129 209.5h1M250 209.5h1M370 209.5h1M510 209.5h2M519 209.5h2M89 215.5h2M141 215.5h1M253 215.5h1M365 215.5h1M508 215.5h1M516 215.5h3M87 214.5h2M139 214.5h1M509 214.5h2M519 214.5h2M84 213.5h3M137 213.5h1M252 213.5h1M367 213.5h1M511 213.5h2M521 213.5h1M75 223.5h2M87 223.5h2M157 223.5h1M257 223.5h1M359 223.5h1M461 223.5h1M74 222.5h1M84 222.5h3M155 222.5h1M510 222.5h2M81 221.5h3M153 221.5h1M256 221.5h1M361 221.5h1M465 221.5h1M512 221.5h2M79 220.5h2M151 220.5h1M467 220.5h1M514 220.5h3M76 219.5h3M149 219.5h1M255 219.5h1M362 219.5h1M469 219.5h1M517 219.5h3M75 218.5h1M147 218.5h1M471 218.5h1M509 218.5h2M520 218.5h2M73 227.5h4M85 227.5h2M163 227.5h1M260 227.5h1M356 227.5h1M451 227.5h1M518 227.5h4M71 226.5h1M83 226.5h2M161 226.5h1M453 226.5h1M522 226.5h3M80 225.5h3M259 225.5h1M357 225.5h1M455 225.5h1M525 225.5h1M77 224.5h3M159 224.5h1M457 224.5h1M459 224.5h1M71 230.5h1M84 230.5h2M169 230.5h1M445 230.5h1M523 230.5h3M80 229.5h4M167 229.5h1M261 229.5h1M354 229.5h1M447 229.5h1M513 229.5h2M526 229.5h2M77 228.5h3M165 228.5h1M449 228.5h1M515 228.5h3M83 234.5h2M177 234.5h1M437 234.5h1M450 234.5h2M524 234.5h4M79 233.5h4M175 233.5h1M263 233.5h1M351 233.5h1M439 233.5h1M452 233.5h2M514 233.5h2M528 233.5h1M76 232.5h3M173 232.5h1M441 232.5h1M516 232.5h3M72 231.5h4M171 231.5h1M262 231.5h1M353 231.5h1M443 231.5h1M519 231.5h4M68 242.5h2M81 242.5h2M191 242.5h1M419 242.5h1M77 241.5h4M267 241.5h1M345 241.5h1M421 241.5h1M423 241.5h1M516 241.5h2M74 240.5h3M189 240.5h1M425 240.5h1M518 240.5h4M70 239.5h4M187 239.5h1M266 239.5h1M346 239.5h1M427 239.5h1M522 239.5h3M69 238.5h1M185 238.5h1M429 238.5h1M442 238.5h2M525 238.5h4M79 245.5h3M197 245.5h1M269 245.5h1M342 245.5h1M413 245.5h1M530 245.5h2M74 244.5h5M195 244.5h1M415 244.5h1M70 243.5h4M193 243.5h1M268 243.5h1M343 243.5h1M417 243.5h1M78 249.5h3M205 249.5h1M272 249.5h1M338 249.5h1M405 249.5h1M531 249.5h2M73 248.5h5M203 248.5h1M407 248.5h1M518 248.5h3M69 247.5h4M201 247.5h1M271 247.5h1M340 247.5h1M409 247.5h1M521 247.5h4M67 246.5h2M199 246.5h1M411 246.5h1M525 246.5h5M77 253.5h3M213 253.5h1M274 253.5h1M335 253.5h1M397 253.5h1M532 253.5h1M534 253.5h1M72 252.5h5M211 252.5h1M399 252.5h1M519 252.5h3M68 251.5h4M209 251.5h1M273 251.5h1M337 251.5h1M401 251.5h1M522 251.5h4M66 250.5h2M207 250.5h1M403 250.5h1M526 250.5h5M75 261.5h3M227 261.5h1M278 261.5h1M329 261.5h1M379 261.5h1M70 260.5h5M225 260.5h1M381 260.5h1M521 260.5h2M66 259.5h4M223 259.5h1M277 259.5h1M331 259.5h1M383 259.5h1M523 259.5h4M63 258.5h1M65 258.5h1M385 258.5h1M527 258.5h5M74 265.5h3M235 265.5h1M280 265.5h1M326 265.5h1M371 265.5h1M67 264.5h7M233 264.5h1M373 264.5h1M64 263.5h3M231 263.5h1M279 263.5h1M327 263.5h1M375 263.5h1M73 269.5h4M243 269.5h1M283 269.5h1M323 269.5h1M363 269.5h1M66 268.5h7M241 268.5h1M365 268.5h1M522 268.5h4M63 267.5h3M239 267.5h1M281 267.5h1M324 267.5h1M367 267.5h1M526 267.5h7M69 272.5h7M249 272.5h1M357 272.5h1M523 272.5h3M62 271.5h7M247 271.5h1M284 271.5h1M321 271.5h1M359 271.5h1M526 271.5h7M68 280.5h8M263 280.5h1M339 280.5h1M62 279.5h6M261 279.5h1M288 279.5h1M315 279.5h1M341 279.5h1M523 279.5h7M68 284.5h8M271 284.5h1M331 284.5h1M60 283.5h1M62 283.5h6M269 283.5h1M290 283.5h1M312 283.5h1M333 283.5h1M67 288.5h8M279 288.5h1M323 288.5h1M61 287.5h6M277 287.5h1M292 287.5h1M308 287.5h1M325 287.5h1M524 287.5h7M61 292.5h14M285 292.5h1M313 292.5h1M61 303.5h14M291 303.5h1M296 303.5h1M301 303.5h1M307 303.5h1M61 307.5h14M281 307.5h1M283 307.5h1M293 307.5h1M303 307.5h1M67 311.5h8M273 311.5h1M290 311.5h1M306 311.5h1M321 311.5h1M531 311.5h6M538 311.5h1M60 312.5h1M62 312.5h5M271 312.5h1M323 312.5h1M68 319.5h8M257 319.5h1M283 319.5h1M310 319.5h1M337 319.5h1M530 319.5h7M62 320.5h6M255 320.5h1M339 320.5h1M68 323.5h8M249 323.5h1M280 323.5h1M312 323.5h1M345 323.5h1M62 324.5h6M245 324.5h1M247 324.5h1M73 326.5h4M241 326.5h1M349 326.5h1M522 326.5h7M66 327.5h7M239 327.5h1M277 327.5h1M314 327.5h1M351 327.5h1M529 327.5h8M63 328.5h3M237 328.5h1M353 328.5h1M73 330.5h4M233 330.5h1M357 330.5h1M526 330.5h7M66 331.5h7M231 331.5h1M274 331.5h1M317 331.5h1M359 331.5h1M533 331.5h3M63 332.5h3M229 332.5h1M361 332.5h1M76 338.5h2M217 338.5h1M373 338.5h1M524 338.5h4M71 339.5h5M215 339.5h1M267 339.5h1M321 339.5h1M375 339.5h1M528 339.5h5M67 340.5h4M211 340.5h1M213 340.5h1M533 340.5h1M535 340.5h1M65 341.5h2M209 341.5h1M266 341.5h1M322 341.5h1M377 341.5h1M76 342.5h3M207 342.5h1M379 342.5h1M71 343.5h5M205 343.5h1M264 343.5h1M323 343.5h1M381 343.5h1M67 344.5h4M203 344.5h1M383 344.5h1M64 345.5h1M66 345.5h1M201 345.5h1M263 345.5h1M324 345.5h1M385 345.5h1M519 345.5h3M77 346.5h3M199 346.5h1M387 346.5h1M522 346.5h4M72 347.5h5M197 347.5h1M261 347.5h1M325 347.5h1M389 347.5h1M526 347.5h5M68 348.5h4M195 348.5h1M391 348.5h1M531 348.5h2M66 349.5h2M193 349.5h1M260 349.5h1M326 349.5h1M393 349.5h1M518 349.5h3M78 350.5h3M191 350.5h1M395 350.5h1M521 350.5h4M73 351.5h5M189 351.5h1M258 351.5h1M327 351.5h1M397 351.5h1M525 351.5h5M69 352.5h4M187 352.5h1M399 352.5h1M530 352.5h2M67 353.5h2M185 353.5h1M256 353.5h1M329 353.5h1M517 353.5h3M81 357.5h2M175 357.5h1M177 357.5h1M253 357.5h1M331 357.5h1M518 357.5h4M77 358.5h4M173 358.5h1M409 358.5h1M522 358.5h3M74 359.5h3M171 359.5h1M252 359.5h1M332 359.5h1M411 359.5h1M525 359.5h4M70 360.5h4M169 360.5h1M413 360.5h1M529 360.5h1M69 361.5h1M82 361.5h2M167 361.5h1M250 361.5h1M333 361.5h1M415 361.5h1M78 362.5h4M165 362.5h1M75 363.5h3M163 363.5h1M248 363.5h1M334 363.5h1M419 363.5h1M71 364.5h4M161 364.5h1M421 364.5h1M514 364.5h2M70 365.5h1M83 365.5h2M159 365.5h1M247 365.5h1M335 365.5h1M423 365.5h1M516 365.5h4M80 366.5h3M157 366.5h1M425 366.5h1M520 366.5h3M76 367.5h4M155 367.5h1M245 367.5h1M336 367.5h1M427 367.5h1M523 367.5h4M73 368.5h3M153 368.5h1M429 368.5h1M513 368.5h2M527 368.5h1M72 369.5h1M84 369.5h2M151 369.5h1M244 369.5h1M337 369.5h1M431 369.5h1M515 369.5h4M81 370.5h3M149 370.5h1M433 370.5h1M519 370.5h3M77 371.5h4M147 371.5h1M242 371.5h1M338 371.5h1M435 371.5h1M512 371.5h2M522 371.5h4M74 372.5h3M145 372.5h1M437 372.5h1M514 372.5h2M527 372.5h1M73 373.5h1M143 373.5h1M241 373.5h1M339 373.5h1M516 373.5h3M87 376.5h2M135 376.5h1M443 376.5h1M512 376.5h3M524 376.5h1M85 377.5h2M133 377.5h1M237 377.5h1M342 377.5h1M445 377.5h1M515 377.5h2M82 378.5h3M131 378.5h1M447 378.5h1M517 378.5h3M79 379.5h3M129 379.5h1M236 379.5h1M343 379.5h1M449 379.5h1M520 379.5h3M77 380.5h2M88 380.5h2M127 380.5h1M451 380.5h1M523 380.5h1M75 381.5h2M86 381.5h2M125 381.5h1M234 381.5h1M344 381.5h1M453 381.5h1M83 382.5h3M123 382.5h1M455 382.5h1M80 383.5h3M90 383.5h1M233 383.5h1M345 383.5h1M457 383.5h1M508 383.5h2M78 384.5h2M88 384.5h2M510 384.5h2M77 385.5h1M86 385.5h2M231 385.5h1M346 385.5h1M461 385.5h1M512 385.5h3M84 386.5h2M463 386.5h1M507 386.5h1M515 386.5h3M82 387.5h2M91 387.5h2M230 387.5h1M347 387.5h1M465 387.5h1M508 387.5h2M518 387.5h2M80 388.5h2M89 388.5h2M467 388.5h1M510 388.5h2M520 388.5h1M79 389.5h1M87 389.5h2M228 389.5h1M348 389.5h1M469 389.5h1M512 389.5h2M85 390.5h2M505 390.5h2M514 390.5h2M83 391.5h2M226 391.5h1M349 391.5h1M507 391.5h2M516 391.5h2M81 392.5h2M509 392.5h2M518 392.5h1M79 393.5h1M225 393.5h1M350 393.5h1M503 393.5h2M511 393.5h2M94 394.5h2M505 394.5h2M513 394.5h2M92 395.5h2M223 395.5h1M352 395.5h1M507 395.5h2M515 395.5h2M90 396.5h2M509 396.5h2M518 396.5h1M88 397.5h2M222 397.5h1M353 397.5h1M511 397.5h2M86 398.5h2M96 398.5h2M513 398.5h2M84 399.5h2M94 399.5h2M220 399.5h1M354 399.5h1M515 399.5h1M92 400.5h2M500 400.5h1M90 401.5h2M99 401.5h1M218 401.5h1M355 401.5h1M501 401.5h2M88 402.5h2M97 402.5h2M503 402.5h2M86 403.5h2M95 403.5h2M217 403.5h1M356 403.5h1M505 403.5h1M84 404.5h1M93 404.5h2M498 404.5h1M506 404.5h2M91 405.5h2M100 405.5h2M215 405.5h1M357 405.5h1M499 405.5h2M508 405.5h2M89 406.5h2M98 406.5h2M501 406.5h2M510 406.5h2M87 407.5h2M96 407.5h2M214 407.5h1M358 407.5h1M496 407.5h1M503 407.5h1M86 408.5h1M94 408.5h2M497 408.5h2M504 408.5h2M92 409.5h2M212 409.5h1M359 409.5h1M499 409.5h2M506 409.5h2M90 410.5h2M501 410.5h1M508 410.5h2M89 411.5h1M211 411.5h1M360 411.5h1M494 411.5h1M502 411.5h2M105 412.5h1M495 412.5h2M504 412.5h2M103 413.5h2M209 413.5h1M361 413.5h1M497 413.5h2M506 413.5h2M101 414.5h2M499 414.5h1M99 415.5h2M107 415.5h1M207 415.5h1M362 415.5h1M500 415.5h2M97 416.5h2M105 416.5h2M502 416.5h2M95 417.5h2M103 417.5h2M206 417.5h1M364 417.5h1M504 417.5h2M93 418.5h2M101 418.5h2M109 418.5h1M490 418.5h1M92 419.5h1M99 419.5h2M107 419.5h2M204 419.5h1M365 419.5h1M491 419.5h2M97 420.5h2M106 420.5h1M493 420.5h2M95 421.5h2M104 421.5h2M203 421.5h1M366 421.5h1M488 421.5h1M495 421.5h1M103 422.5h1M111 422.5h1M489 422.5h2M496 422.5h2M101 423.5h2M109 423.5h2M201 423.5h1M367 423.5h1M491 423.5h1M498 423.5h2M100 424.5h1M107 424.5h2M486 424.5h1M492 424.5h2M500 424.5h2M98 425.5h2M105 425.5h2M200 425.5h1M368 425.5h1M487 425.5h2M494 425.5h1M104 426.5h1M489 426.5h1M495 426.5h2M102 427.5h2M198 427.5h1M369 427.5h1M483 427.5h1M490 427.5h1M497 427.5h1M100 428.5h2M115 428.5h1M484 428.5h1M491 428.5h2M498 428.5h2M113 429.5h2M196 429.5h1M370 429.5h1M485 429.5h2M493 429.5h1M500 429.5h1M112 430.5h1M487 430.5h1M494 430.5h1M111 431.5h1M117 431.5h1M195 431.5h1M371 431.5h1M488 431.5h1M495 431.5h2M109 432.5h2M116 432.5h1M489 432.5h2M108 433.5h1M114 433.5h2M193 433.5h1M372 433.5h1M491 433.5h1M107 434.5h1M113 434.5h1M479 434.5h1M492 434.5h1M105 435.5h2M112 435.5h1M120 435.5h1M192 435.5h1M373 435.5h1M480 435.5h2M493 435.5h2M111 436.5h1M118 436.5h2M482 436.5h1M495 436.5h1M110 437.5h1M117 437.5h1M190 437.5h1M374 437.5h1M476 437.5h1M483 437.5h1M108 438.5h2M115 438.5h2M122 438.5h1M477 438.5h1M484 438.5h2M107 439.5h1M114 439.5h1M120 439.5h2M188 439.5h1M376 439.5h1M478 439.5h2M486 439.5h1M106 440.5h1M112 440.5h2M119 440.5h1M474 440.5h1M480 440.5h1M487 440.5h1M111 441.5h1M118 441.5h1M187 441.5h1M377 441.5h1M475 441.5h1M481 441.5h1M488 441.5h2M109 442.5h2M116 442.5h2M476 442.5h2M482 442.5h2M108 443.5h1M115 443.5h1M185 443.5h1M378 443.5h1M471 443.5h1M478 443.5h1M484 443.5h1M114 444.5h1M127 444.5h1M472 444.5h1M479 444.5h1M485 444.5h1M112 445.5h2M126 445.5h1M184 445.5h1M379 445.5h1M473 445.5h2M480 445.5h1M486 445.5h2M124 446.5h2M475 446.5h1M481 446.5h1M488 446.5h1M123 447.5h1M130 447.5h1M182 447.5h1M380 447.5h1M476 447.5h1M482 447.5h2M122 448.5h1M129 448.5h1M477 448.5h1M484 448.5h1M121 449.5h1M127 449.5h2M181 449.5h1M381 449.5h1M466 449.5h1M478 449.5h1M485 449.5h1M120 450.5h1M126 450.5h1M132 450.5h1M467 450.5h1M479 450.5h2M118 451.5h2M125 451.5h1M131 451.5h1M179 451.5h1M382 451.5h1M468 451.5h2M481 451.5h1M117 452.5h1M124 452.5h1M130 452.5h1M464 452.5h1M470 452.5h1M116 453.5h1M123 453.5h1M129 453.5h1M135 453.5h1M383 453.5h1M465 453.5h1M471 453.5h1M121 454.5h2M127 454.5h2M134 454.5h1M466 454.5h1M472 454.5h1M120 455.5h1M126 455.5h1M133 455.5h1M384 455.5h1M461 455.5h1M467 455.5h1M473 455.5h1M125 456.5h1M132 456.5h1M462 456.5h1M468 456.5h1M474 456.5h2M124 457.5h1M130 457.5h2M385 457.5h1M463 457.5h1M469 457.5h1M476 457.5h1M123 458.5h1M129 458.5h1M140 458.5h1M458 458.5h1M464 458.5h1M470 458.5h1M128 459.5h1M139 459.5h1M387 459.5h1M459 459.5h1M465 459.5h1M471 459.5h1M127 460.5h1M138 460.5h1M460 460.5h1M466 460.5h1M472 460.5h1M126 461.5h1M137 461.5h1M143 461.5h1M388 461.5h1M461 461.5h1M467 461.5h1M473 461.5h1M136 462.5h1M142 462.5h1M462 462.5h1M468 462.5h1M474 462.5h1M135 463.5h1M141 463.5h1M389 463.5h1M453 463.5h1M463 463.5h1M469 463.5h1M134 464.5h1M140 464.5h1M146 464.5h1M454 464.5h1M464 464.5h1M470 464.5h1M133 465.5h1M139 465.5h1M145 465.5h1M390 465.5h1M455 465.5h1M465 465.5h1M132 466.5h1M138 466.5h1M144 466.5h1M149 466.5h1M450 466.5h1M456 466.5h1M466 466.5h1M131 467.5h1M137 467.5h1M143 467.5h1M148 467.5h1M391 467.5h1M451 467.5h1M457 467.5h1M467 467.5h1M136 468.5h1M142 468.5h1M147 468.5h1M447 468.5h1M452 468.5h1M458 468.5h1M135 469.5h1M141 469.5h1M147 469.5h1M392 469.5h1M448 469.5h1M453 469.5h1M458 469.5h1M134 470.5h1M140 470.5h1M146 470.5h1M449 470.5h1M454 470.5h1M459 470.5h1M139 471.5h1M145 471.5h1M155 471.5h1M444 471.5h1M449 471.5h1M455 471.5h1M460 471.5h1M138 472.5h1M144 472.5h1M154 472.5h1M445 472.5h1M450 472.5h1M455 472.5h1M461 472.5h1M137 473.5h1M143 473.5h1M153 473.5h1M446 473.5h1M451 473.5h1M456 473.5h1M142 474.5h1M153 474.5h1M158 474.5h1M446 474.5h1M452 474.5h1M457 474.5h1M142 475.5h1M152 475.5h1M157 475.5h1M447 475.5h1M453 475.5h1M458 475.5h1M141 476.5h1M151 476.5h1M156 476.5h1M161 476.5h1M438 476.5h1M448 476.5h1M454 476.5h1M150 477.5h1M156 477.5h1M160 477.5h1M439 477.5h1M449 477.5h1M454 477.5h1M149 478.5h1M155 478.5h1M159 478.5h1M435 478.5h1M439 478.5h1M450 478.5h1M455 478.5h1M148 479.5h1M154 479.5h1M159 479.5h1M164 479.5h1M436 479.5h1M440 479.5h1M451 479.5h1M148 480.5h1M153 480.5h1M158 480.5h1M163 480.5h1M436 480.5h1M441 480.5h1M451 480.5h1M147 481.5h1M152 481.5h1M157 481.5h1M163 481.5h1M431 481.5h1M437 481.5h1M442 481.5h1M452 481.5h1M151 482.5h1M156 482.5h1M162 482.5h1M432 482.5h1M438 482.5h1M442 482.5h1M453 482.5h1M151 483.5h1M156 483.5h1M161 483.5h1M428 483.5h1M433 483.5h1M438 483.5h1M443 483.5h1M150 484.5h1M155 484.5h1M160 484.5h1M170 484.5h1M429 484.5h1M433 484.5h1M439 484.5h1M444 484.5h1M154 485.5h1M160 485.5h1M169 485.5h1M429 485.5h1M434 485.5h1M440 485.5h1M445 485.5h1M153 486.5h1M159 486.5h1M169 486.5h1M174 486.5h1M430 486.5h1M435 486.5h1M440 486.5h1M445 486.5h1M153 487.5h1M158 487.5h1M168 487.5h1M173 487.5h1M422 487.5h1M431 487.5h1M436 487.5h1M441 487.5h1M152 488.5h1M157 488.5h1M167 488.5h1M173 488.5h1M177 488.5h1M423 488.5h1M432 488.5h1M437 488.5h1M442 488.5h1M157 489.5h1M166 489.5h1M172 489.5h1M176 489.5h1M418 489.5h1M423 489.5h1M432 489.5h1M438 489.5h1M442 489.5h1M166 490.5h1M171 490.5h1M176 490.5h1M180 490.5h1M419 490.5h1M424 490.5h1M433 490.5h1M438 490.5h1M443 490.5h1M165 491.5h1M170 491.5h1M175 491.5h1M179 491.5h1M415 491.5h1M419 491.5h1M424 491.5h1M434 491.5h1M439 491.5h1M164 492.5h1M170 492.5h1M174 492.5h1M179 492.5h1M416 492.5h1M420 492.5h1M425 492.5h1M435 492.5h1M440 492.5h1M163 493.5h1M169 493.5h1M174 493.5h1M178 493.5h1M412 493.5h1M416 493.5h1M421 493.5h1M426 493.5h1M435 493.5h1M163 494.5h1M168 494.5h1M173 494.5h1M178 494.5h1M187 494.5h1M413 494.5h1M417 494.5h1M421 494.5h1M426 494.5h1M162 495.5h1M167 495.5h1M172 495.5h1M177 495.5h1M186 495.5h1M413 495.5h1M417 495.5h1M422 495.5h1M427 495.5h1M167 496.5h1M172 496.5h1M176 496.5h1M186 496.5h1M191 496.5h1M414 496.5h1M418 496.5h1M423 496.5h1M427 496.5h1M171 497.5h1M176 497.5h1M185 497.5h1M190 497.5h1M405 497.5h1M414 497.5h1M418 497.5h1M423 497.5h1M428 497.5h1M170 498.5h1M175 498.5h1M185 498.5h1M190 498.5h1M194 498.5h1M405 498.5h1M415 498.5h1M419 498.5h1M424 498.5h1M428 498.5h1M170 499.5h1M175 499.5h1M184 499.5h1M189 499.5h1M193 499.5h1M401 499.5h1M406 499.5h1M415 499.5h1M419 499.5h1M425 499.5h1M169 500.5h1M174 500.5h1M183 500.5h1M189 500.5h1M193 500.5h1M198 500.5h1M402 500.5h1M406 500.5h1M416 500.5h1M420 500.5h1M425 500.5h1M174 501.5h1M183 501.5h1M188 501.5h1M192 501.5h1M197 501.5h1M398 501.5h1M402 501.5h1M407 501.5h1M416 501.5h1M420 501.5h1M182 502.5h1M187 502.5h1M192 502.5h1M197 502.5h1M398 502.5h1M403 502.5h1M407 502.5h1M417 502.5h1M421 502.5h1M182 503.5h1M187 503.5h1M191 503.5h1M196 503.5h1M205 503.5h1M394 503.5h1M399 503.5h1M403 503.5h1M408 503.5h1M417 503.5h1M421 503.5h1M181 504.5h1M186 504.5h1M190 504.5h1M196 504.5h1M205 504.5h1M395 504.5h1M399 504.5h1M404 504.5h1M408 504.5h1M418 504.5h1M181 505.5h1M186 505.5h1M190 505.5h1M195 505.5h1M204 505.5h1M208 505.5h1M395 505.5h1M400 505.5h1M404 505.5h1M409 505.5h1M418 505.5h1M185 506.5h1M189 506.5h1M194 506.5h1M204 506.5h1M208 506.5h1M387 506.5h1M396 506.5h1M400 506.5h1M405 506.5h1M409 506.5h1M419 506.5h1M185 507.5h1M189 507.5h1M194 507.5h1M203 507.5h1M207 507.5h1M212 507.5h1M387 507.5h1M396 507.5h1M401 507.5h1M405 507.5h1M410 507.5h1M188 508.5h1M193 508.5h1M203 508.5h1M207 508.5h1M211 508.5h1M215 508.5h1M383 508.5h1M388 508.5h1M397 508.5h1M401 508.5h1M406 508.5h1M410 508.5h1M188 509.5h1M193 509.5h1M202 509.5h1M206 509.5h1M211 509.5h1M215 509.5h1M380 509.5h1M384 509.5h1M388 509.5h1M397 509.5h1M402 509.5h1M406 509.5h1M411 509.5h1M192 510.5h1M202 510.5h1M206 510.5h1M210 510.5h1M214 510.5h1M223 510.5h1M376 510.5h1M380 510.5h1M384 510.5h1M389 510.5h1M398 510.5h1M402 510.5h1M407 510.5h1M192 511.5h1M201 511.5h1M205 511.5h1M210 511.5h1M214 511.5h1M223 511.5h1M376 511.5h1M381 511.5h1M385 511.5h1M389 511.5h1M398 511.5h1M403 511.5h1M407 511.5h1M201 512.5h1M205 512.5h1M209 512.5h1M227 512.5h1M377 512.5h1M381 512.5h1M385 512.5h1M390 512.5h1M399 512.5h1M403 512.5h1M408 512.5h1M200 513.5h1M204 513.5h1M209 513.5h1M227 513.5h1M230 513.5h1M369 513.5h1M377 513.5h1M386 513.5h1M390 513.5h1M399 513.5h1M200 514.5h1M204 514.5h1M208 514.5h1M226 514.5h1M230 514.5h1M234 514.5h1M365 514.5h1M369 514.5h1M386 514.5h1M391 514.5h1M400 514.5h1M404 514.5h1M199 515.5h1M203 515.5h1M208 515.5h1M221 515.5h1M226 515.5h1M234 515.5h1M361 515.5h1M365 515.5h1M387 515.5h1M391 515.5h1M203 516.5h1M207 516.5h1M221 516.5h1M242 516.5h1M357 516.5h1M361 516.5h1M387 516.5h1M392 516.5h1M202 518.5h1M206 518.5h1M211 518.5h1M388 518.5h1M207 517.5h1M242 517.5h1M357 517.5h1M388 517.5h1M392 517.5h1M211 519.5h1M384 519.5h1M389 519.5h1M393 519.5h1M210 520.5h1M380 520.5h1M384 520.5h1M218 523.5h1M223 523.5h1M381 523.5h1M223 522.5h1M338 522.5h1M381 522.5h1M222 524.5h1M226 527.5h1M230 527.5h1M238 529.5h1M242 529.5h1M361 529.5h1M242 530.5h1M246 530.5h1M353 530.5h1M246 531.5h1M250 531.5h1M349 531.5h1M353 531.5h1M250 532.5h1M341 532.5h1M345 532.5h1M349 532.5h1M258 533.5h1M341 533.5h1M258 535.5h1M283 538.5h1M312 538.5h1M338 521.5h1M380 521.5h1M385 521.5h1M345 534.5h1M365 528.5h1M369 526.5h1M373 525.5h1M137 375.5h1M239 375.5h1M341 375.5h1M441 375.5h1M510 375.5h2M522 375.5h2M139 374.5h1M141 374.5h1M439 374.5h1M519 374.5h3M179 356.5h1M407 356.5h1M516 356.5h2M529 356.5h2M183 354.5h1M403 354.5h1M520 354.5h4M255 355.5h1M330 355.5h1M405 355.5h1M524 355.5h5M219 337.5h1M269 337.5h1M320 337.5h1M371 337.5h1M521 337.5h3M227 333.5h1M272 333.5h1M318 333.5h1M363 333.5h1M522 333.5h3M225 334.5h1M365 334.5h1M525 334.5h7M223 335.5h1M271 335.5h1M319 335.5h1M367 335.5h1M532 335.5h3M235 329.5h1M275 329.5h1M315 329.5h1M355 329.5h1M522 329.5h4M259 318.5h1M335 318.5h1M523 318.5h7M267 314.5h1M327 314.5h1M523 314.5h8M265 315.5h1M286 315.5h1M308 315.5h1M329 315.5h1M531 315.5h6M538 315.5h1M275 310.5h1M319 310.5h1M524 310.5h7M285 306.5h1M313 306.5h1M524 306.5h14M291 295.5h1M297 295.5h1M302 295.5h1M307 295.5h1M524 295.5h14M295 291.5h1M305 291.5h1M315 291.5h1M317 291.5h1M524 291.5h14M275 286.5h1M327 286.5h1M531 286.5h6M538 286.5h1M259 278.5h1M343 278.5h1M530 278.5h7M253 275.5h1M286 275.5h1M318 275.5h1M349 275.5h1M523 275.5h7M351 274.5h1M353 274.5h1M530 274.5h7M245 270.5h1M361 270.5h1M533 270.5h4M237 266.5h1M369 266.5h1M533 266.5h3M221 257.5h1M276 257.5h1M332 257.5h1M387 257.5h1M389 257.5h1M532 257.5h2M219 256.5h1M391 256.5h1M520 256.5h3M217 255.5h1M275 255.5h1M334 255.5h1M393 255.5h1M523 255.5h4M215 254.5h1M395 254.5h1M527 254.5h5M183 237.5h1M265 237.5h1M348 237.5h1M431 237.5h1M444 237.5h2M515 237.5h2M529 237.5h1M181 236.5h1M433 236.5h1M446 236.5h2M517 236.5h4M179 235.5h1M264 235.5h1M435 235.5h1M448 235.5h2M521 235.5h3M145 217.5h1M254 217.5h1M364 217.5h1M473 217.5h1M511 217.5h2M522 217.5h2M143 216.5h1M475 216.5h1M513 216.5h3M297 300.5h1M301 300.5h1M295 301.5h1M297 301.5h1M300 301.5h1M303 301.5h1M293 302.5h1M289 304.5h1M309 304.5h1M287 305.5h1M294 305.5h1M302 305.5h1M311 305.5h1M279 308.5h1M315 308.5h1M277 309.5h1M291 309.5h1M304 309.5h1M317 309.5h1M269 313.5h1M288 313.5h1M307 313.5h1M325 313.5h1M263 316.5h1M331 316.5h1M261 317.5h1M285 317.5h1M309 317.5h1M333 317.5h1M253 321.5h1M282 321.5h1M311 321.5h1M341 321.5h1M251 322.5h1M343 322.5h1M243 325.5h1M278 325.5h1M313 325.5h1M347 325.5h1M221 336.5h1M369 336.5h1M297 298.5h1M301 298.5h1M295 297.5h1M298 297.5h1M301 297.5h1M303 297.5h1M293 296.5h1M305 296.5h1M289 294.5h1M309 294.5h1M287 293.5h1M296 293.5h1M304 293.5h1M311 293.5h1M283 290.5h1M319 290.5h1M281 289.5h1M294 289.5h1M307 289.5h1M321 289.5h1M273 285.5h1M291 285.5h1M310 285.5h1M329 285.5h1M267 282.5h1M335 282.5h1M265 281.5h1M289 281.5h1M313 281.5h1M337 281.5h1M257 277.5h1M287 277.5h1M316 277.5h1M345 277.5h1M255 276.5h1M347 276.5h1M251 273.5h1M285 273.5h1M320 273.5h1M355 273.5h1M229 262.5h1M377 262.5h1M299.5 61v14M299.5 524v14M327.5 62v7M327.5 526v7M326.5 69v8M326.5 522v4M272.5 73v3M272.5 523v6M271.5 66v7M271.5 529v8M386.5 81v3M383.5 516v3M385.5 84v3M376.5 84v3M377.5 81v3M378.5 514v3M379.5 76v3M379.5 517v3M371.5 73v4M371.5 518v4M372.5 522v3M373.5 80v3M374.5 77v3M368.5 523v3M369.5 80v4M370.5 77v3M370.5 515v3M364.5 524v4M365.5 79v4M366.5 76v3M366.5 516v3M367.5 72v4M367.5 519v4M357.5 77v4M358.5 74v3M358.5 518v4M359.5 70v4M359.5 522v3M360.5 525v4M353.5 79v3M354.5 74v5M355.5 70v4M349.5 78v3M350.5 73v5M350.5 518v3M351.5 69v4M351.5 521v4M352.5 525v5M345.5 77v3M346.5 72v5M346.5 519v3M347.5 68v4M347.5 522v4M348.5 526v5M337.5 75v3M338.5 70v5M339.5 66v4M339.5 523v4M340.5 527v5M333.5 74v3M334.5 67v7M335.5 64v3M329.5 73v4M330.5 66v7M330.5 522v4M331.5 63v3M331.5 526v7M318.5 68v8M319.5 62v6M319.5 523v7M314.5 68v8M315.5 62v6M310.5 67v8M311.5 62v5M311.5 524v7M306.5 61v14M295.5 61v14M291.5 61v14M287.5 67v8M287.5 531v7M286.5 62v5M279.5 68v8M279.5 530v7M278.5 62v6M275.5 68v8M274.5 62v6M270.5 62v4M268.5 73v4M268.5 526v7M267.5 66v7M267.5 533v3M266.5 63v3M260.5 524v4M259.5 71v5M259.5 528v5M258.5 67v4M256.5 76v3M255.5 71v5M254.5 67v4M253.5 519v3M252.5 77v3M252.5 522v4M251.5 72v5M251.5 526v5M250.5 68v4M249.5 518v3M248.5 78v3M248.5 521v4M247.5 73v5M247.5 525v5M246.5 69v4M245.5 517v3M241.5 518v4M240.5 77v4M240.5 522v3M239.5 74v3M239.5 525v4M238.5 70v4M236.5 78v4M235.5 75v3M234.5 71v4M233.5 516v4M232.5 80v3M232.5 520v3M231.5 76v4M231.5 523v4M230.5 73v3M229.5 515v4M228.5 81v3M228.5 519v3M227.5 77v4M227.5 522v4M226.5 74v3M225.5 516v3M222.5 512v3M220.5 82v3M220.5 517v3M219.5 79v3M219.5 520v3M216.5 83v3M215.5 80v3M213.5 512v3M212.5 515v3M224.5 519v3M244.5 520v4M243.5 524v5M261.5 521v3M265.5 522v3M264.5 525v7M263.5 532v3M269.5 522v4M280.5 523v7M284.5 523v8M283.5 531v6M288.5 524v7M292.5 524v14M303.5 524v14M307.5 524v14M312.5 531v6M320.5 530v7M323.5 523v7M324.5 530v7M328.5 533v3M332.5 533v3M342.5 520v3M343.5 523v4M344.5 527v5M362.5 517v4M363.5 521v3M382.5 513v3M294.5 455v13"/>
<path stroke="#ff0000" d="M149 299.5h1M155 299.5h1M258 405.5h1M264 405.5h1M281 405.5h7M440 405.5h1M283 431.5h1M342 39.5h1M354 39.5h1M341 38.5h1M355 38.5h1M341 34.5h1M345 34.5h1M351 34.5h1M355 34.5h1M342 33.5h3M352 33.5h3M59 393.5h1M246 393.5h1M316 393.5h1M356 393.5h6M58 392.5h1M245 392.5h1M320 392.5h1M362 392.5h6M45 391.5h1M57 391.5h1M244 391.5h1M324 391.5h1M368 391.5h6M44 390.5h1M46 390.5h1M56 390.5h1M243 390.5h1M328 390.5h1M374 390.5h6M46 386.5h1M56 386.5h1M240 386.5h1M348 386.5h1M399 386.5h6M46 380.5h1M56 380.5h1M234 380.5h1M372 380.5h1M47 379.5h1M55 379.5h1M233 379.5h1M376 379.5h1M48 378.5h1M54 378.5h1M232 378.5h1M380 378.5h1M413 378.5h1M49 377.5h5M231 377.5h1M384 377.5h1M43 389.5h1M243 389.5h1M380 389.5h7M326 479.5h1M340 479.5h1M489 479.5h1M326 478.5h1M340 478.5h1M490 478.5h1M491 477.5h1M499 477.5h1M492 476.5h1M498 476.5h1M333 475.5h1M493 475.5h1M497 475.5h1M494 474.5h1M496 474.5h1M495 473.5h1M326 472.5h1M340 472.5h1M494 472.5h1M496 472.5h1M326 471.5h1M340 471.5h1M493 471.5h1M497 471.5h1M327 470.5h1M339 470.5h1M492 470.5h1M498 470.5h1M328 469.5h1M338 469.5h1M491 469.5h1M499 469.5h1M329 468.5h2M336 468.5h2M500 468.5h1M331 467.5h5M501 467.5h1M502 466.5h1M503 465.5h1M504 464.5h1M501 463.5h4M253 400.5h1M284 400.5h1M312 400.5h7M438 400.5h2M254 401.5h1M280 401.5h1M306 401.5h6M440 401.5h1M259 406.5h2M275 406.5h6M440 406.5h1M256 407.5h1M260 407.5h1M269 407.5h6M439 407.5h1M252 408.5h1M261 408.5h1M263 408.5h6M439 408.5h1M248 409.5h1M257 409.5h6M438 409.5h1M244 410.5h1M251 410.5h6M263 410.5h1M438 410.5h1M236 411.5h1M244 411.5h7M264 411.5h1M437 411.5h1M232 412.5h1M238 412.5h6M265 412.5h1M437 412.5h10M448 412.5h4M252 399.5h1M288 399.5h1M292 399.5h1M319 399.5h6M448 399.5h1M251 398.5h1M296 398.5h1M325 398.5h6M449 398.5h1M242 388.5h1M336 388.5h1M340 388.5h1M387 388.5h6M419 388.5h1M120 264.5h5M401 264.5h1M120 254.5h5M127 254.5h1M119 263.5h1M125 263.5h1M195 263.5h1M119 255.5h1M125 255.5h2M400 255.5h1M118 262.5h1M126 262.5h1M118 256.5h1M126 256.5h1M203 256.5h1M128 253.5h1M207 253.5h1M129 252.5h1M400 252.5h1M130 251.5h1M131 250.5h1M132 249.5h1M211 249.5h1M399 249.5h1M128 248.5h5M154 260.5h1M199 260.5h1M331 483.5h5M329 482.5h2M336 482.5h2M328 481.5h1M338 481.5h1M327 480.5h1M339 480.5h1M327 446.5h1M159 295.5h1M163 292.5h1M745 292.5h1M167 288.5h1M404 288.5h1M747 288.5h1M171 285.5h1M403 285.5h1M175 281.5h1M744 281.5h1M749 281.5h1M179 278.5h1M750 278.5h1M183 274.5h1M187 271.5h1M191 267.5h1M401 267.5h1M215 246.5h1M399 246.5h1M219 242.5h1M745 242.5h1M751 242.5h1M223 239.5h1M227 235.5h1M231 231.5h1M397 231.5h1M235 228.5h1M397 228.5h1M239 224.5h1M243 221.5h1M247 217.5h1M251 214.5h1M255 210.5h1M395 210.5h1M259 207.5h1M395 207.5h1M263 203.5h1M267 200.5h1M271 196.5h1M275 192.5h1M393 192.5h1M279 189.5h1M283 185.5h1M287 182.5h1M291 178.5h1M295 175.5h1M299 171.5h1M303 168.5h1M307 164.5h1M311 160.5h1M315 157.5h1M238 384.5h1M356 384.5h1M411 384.5h4M294 442.5h1M293 441.5h1M292 440.5h1M291 439.5h1M290 438.5h1M289 437.5h1M288 436.5h1M287 435.5h1M286 434.5h1M285 433.5h1M284 432.5h1M282 430.5h1M281 429.5h1M280 428.5h1M279 427.5h1M278 426.5h1M278 425.5h1M277 424.5h1M276 423.5h1M274 421.5h1M273 420.5h1M272 419.5h1M271 418.5h1M270 417.5h1M216 416.5h4M269 416.5h1M220 415.5h6M268 415.5h1M224 414.5h1M226 414.5h6M267 414.5h1M228 413.5h1M232 413.5h6M266 413.5h1M257 404.5h1M268 404.5h1M288 404.5h4M293 404.5h1M256 403.5h1M272 403.5h1M294 403.5h6M255 402.5h1M276 402.5h1M300 402.5h6M250 397.5h1M300 397.5h1M331 397.5h6M249 396.5h1M304 396.5h1M337 396.5h6M248 395.5h1M308 395.5h1M343 395.5h7M247 394.5h1M312 394.5h1M350 394.5h6M241 387.5h1M344 387.5h1M393 387.5h6M239 385.5h1M352 385.5h1M405 385.5h6M237 383.5h1M360 383.5h1M236 382.5h1M364 382.5h1M235 381.5h1M368 381.5h1M414 381.5h1M230 376.5h1M388 376.5h1M392 376.5h1M229 375.5h1M396 375.5h1M413 375.5h1M228 374.5h1M400 374.5h1M227 373.5h1M404 373.5h1M226 372.5h1M408 372.5h1M413 372.5h1M225 371.5h1M412 371.5h1M224 370.5h1M223 369.5h1M412 369.5h1M420 369.5h1M222 368.5h1M424 368.5h1M221 367.5h1M220 366.5h1M412 366.5h1M219 365.5h1M218 364.5h1M217 363.5h1M412 363.5h1M216 362.5h1M215 361.5h1M214 360.5h1M411 360.5h1M213 359.5h1M212 358.5h1M211 357.5h1M411 357.5h1M210 356.5h1M209 355.5h1M208 354.5h1M411 354.5h1M208 353.5h1M207 352.5h1M206 351.5h1M410 351.5h1M205 350.5h1M204 349.5h1M203 348.5h1M410 348.5h1M202 347.5h1M201 346.5h1M200 345.5h1M410 345.5h1M199 344.5h1M198 343.5h1M197 342.5h1M409 342.5h1M196 341.5h1M195 340.5h1M194 339.5h1M409 339.5h1M193 338.5h1M192 337.5h1M191 336.5h1M409 336.5h1M190 335.5h1M189 334.5h1M188 333.5h1M408 333.5h1M187 332.5h1M186 331.5h1M185 330.5h1M408 330.5h1M184 329.5h1M183 328.5h1M182 327.5h1M408 327.5h1M181 326.5h1M180 325.5h1M179 324.5h1M408 324.5h1M178 323.5h1M177 322.5h1M176 321.5h1M407 321.5h1M174 319.5h1M173 318.5h1M407 318.5h1M173 317.5h1M171 315.5h1M407 315.5h1M170 314.5h1M169 313.5h1M168 312.5h1M406 312.5h1M167 311.5h1M166 310.5h1M165 309.5h1M406 309.5h1M164 308.5h1M163 307.5h1M162 306.5h1M406 306.5h1M161 305.5h1M160 304.5h1M159 303.5h1M405 303.5h1M158 302.5h1M157 301.5h1M156 300.5h1M405 300.5h1M405 297.5h1M404 294.5h1M404 291.5h1M746 291.5h1M403 282.5h1M744 282.5h1M749 282.5h1M403 279.5h1M746 279.5h2M749 279.5h1M402 276.5h1M750 276.5h2M402 273.5h1M402 270.5h1M401 261.5h1M400 258.5h1M399 243.5h1M745 243.5h2M750 243.5h2M398 240.5h1M748 240.5h1M398 237.5h1M745 237.5h2M750 237.5h2M398 234.5h1M397 225.5h1M396 222.5h1M396 219.5h1M396 216.5h1M395 213.5h1M395 204.5h1M394 201.5h1M394 198.5h1M394 195.5h1M744 111.5h1M747 111.5h1M750 111.5h2M744 112.5h1M747 112.5h1M752 112.5h1M745 110.5h2M749 110.5h1M752 110.5h1M745 113.5h2M750 113.5h2M747 114.5h3M744 109.5h1M749 109.5h1M752 109.5h1M745 108.5h2M750 108.5h2M747 107.5h3M744 146.5h1M746 146.5h1M748 146.5h1M750 154.5h2M751 152.5h1M744 190.5h2M747 190.5h3M751 190.5h2M744 186.5h1M752 186.5h1M745 187.5h1M751 187.5h1M745 193.5h1M751 193.5h1M744 194.5h1M752 194.5h1M745 238.5h1M751 238.5h1M747 244.5h3M747 236.5h3M745 280.5h1M748 280.5h1M745 283.5h1M748 283.5h1M746 284.5h2M751 277.5h1M745 287.5h2M747 289.5h1M746 290.5h1M745 293.5h5M751 293.5h2M751 286.5h1M341.5 473v5M340.5 35v3M356.5 35v3M346.5 35v3M350.5 35v3M347.5 38v4M349.5 38v4M348.5 42v8M57.5 381v5M55.5 387v3M47.5 387v3M45.5 381v5M505.5 463v5M441.5 402v3M447.5 400v15M127.5 257v5M117.5 257v5M133.5 248v6M325.5 473v5M747.5 147v7M746.5 188v5M745.5 147v7M744.5 239v3M749.5 147v7M750.5 188v5M750.5 287v8M752.5 151v3M752.5 239v3M752.5 276v3"/>
<path stroke="#00ffff" d="M283 425.5h2M327 425.5h1M331 425.5h1M181 355.5h1M399 383.5h1M414 383.5h1M186 376.5h1M411 376.5h1M295 443.5h1M274 422.5h3M331 422.5h1M337 422.5h1M172 316.5h1M240 410.5h3M353 410.5h1M361 410.5h1M297 442.5h2M299 441.5h1M301 440.5h1M325 440.5h1M303 438.5h1M319 438.5h3M305 437.5h1M307 437.5h1M317 437.5h2M307 436.5h1M310 436.5h1M314 436.5h3M309 435.5h1M311 435.5h2M308 434.5h4M300 431.5h2M315 431.5h1M319 431.5h1M294 429.5h3M319 429.5h1M291 428.5h3M321 428.5h1M325 428.5h1M288 427.5h3M323 427.5h1M328 427.5h1M285 426.5h3M325 426.5h1M277 423.5h3M329 423.5h1M271 421.5h3M333 421.5h1M340 421.5h1M268 420.5h3M335 420.5h1M266 419.5h2M337 419.5h1M343 419.5h1M263 418.5h3M339 418.5h1M346 418.5h1M257 416.5h3M341 416.5h1M349 416.5h1M254 415.5h3M343 415.5h1M352 415.5h1M251 414.5h3M345 414.5h1M249 413.5h2M347 413.5h1M355 413.5h1M246 412.5h3M349 412.5h1M358 412.5h1M243 411.5h1M351 411.5h1M234 408.5h3M355 408.5h1M232 407.5h2M357 407.5h1M367 407.5h1M229 406.5h3M359 406.5h1M370 406.5h1M226 405.5h3M361 405.5h1M223 404.5h3M363 404.5h1M373 404.5h1M220 403.5h3M365 403.5h1M376 403.5h1M215 401.5h2M367 401.5h1M379 401.5h1M212 400.5h3M369 400.5h1M382 400.5h1M209 399.5h3M371 399.5h1M206 398.5h3M373 398.5h1M385 398.5h1M203 397.5h3M375 397.5h1M388 397.5h1M200 396.5h3M377 396.5h1M198 395.5h2M379 395.5h1M391 395.5h1M192 393.5h3M381 393.5h1M191 392.5h1M383 392.5h1M397 392.5h1M385 391.5h1M400 391.5h1M387 390.5h1M389 389.5h1M403 389.5h1M393 386.5h1M409 386.5h1M395 385.5h1M412 385.5h1M397 384.5h1M401 382.5h1M414 382.5h1M403 381.5h1M405 380.5h1M414 380.5h1M407 378.5h1M409 377.5h1M417 373.5h1M419 371.5h1M421 370.5h1M423 369.5h1M425 368.5h1M160 262.5h1M161 265.5h1M161 268.5h1M162 271.5h1M163 274.5h1M163 277.5h1M164 280.5h1M165 283.5h1M166 286.5h1M166 289.5h1M167 292.5h1M168 295.5h1M168 298.5h1M169 301.5h1M170 304.5h1M170 307.5h1M171 310.5h1M172 313.5h1M173 319.5h1M174 322.5h1M175 325.5h1M175 328.5h1M176 331.5h1M177 334.5h1M177 337.5h1M178 340.5h1M179 343.5h1M179 346.5h1M180 349.5h1M181 352.5h1M182 358.5h1M184 367.5h1M162 256.5h1M162 257.5h1M164 267.5h1M304 439.5h1M322 439.5h3M305 433.5h3M316 433.5h1M302 432.5h3M297 430.5h3M322 430.5h1M280 424.5h3M334 424.5h1M260 417.5h3M237 409.5h3M364 409.5h1M217 402.5h3M195 394.5h3M394 394.5h1M406 388.5h1M171.5 297v5M424.5 297v8M181.5 346v5M417.5 355v9M175.5 317v5M172.5 302v5M416.5 364v8M313.5 433v3M415.5 372v8M419.5 339v8M421.5 322v8M423.5 305v8M425.5 288v9M418.5 347v8M420.5 330v9M422.5 313v9M426.5 280v8M427.5 272v8M428.5 263v9M429.5 255v8M430.5 247v8M431.5 243v4M163.5 258v5M164.5 263v3M165.5 268v5M166.5 273v5M167.5 278v4M168.5 282v5M169.5 287v5M170.5 292v5M173.5 307v5M174.5 312v5M176.5 322v4M177.5 326v5M178.5 331v5M179.5 336v5M180.5 341v5M182.5 351v5M183.5 356v6M184.5 361v5M185.5 366v5M186.5 370v5M187.5 375v5M188.5 380v6M189.5 385v5M190.5 390v3"/>
<path stroke="#00ff00" d="M195 299.5h1M201 299.5h1M392 299.5h1M316 156.5h1M411 156.5h1M421 156.5h1M316 157.5h1M287 396.5h1M287 398.5h1M289 398.5h1M97 121.5h2M100 121.5h5M106 121.5h2M96 120.5h1M108 120.5h1M95 119.5h1M109 119.5h1M97 133.5h2M100 133.5h5M106 133.5h2M750 133.5h1M96 134.5h1M108 134.5h1M749 134.5h1M751 134.5h1M95 135.5h1M109 135.5h1M245 353.5h1M249 353.5h1M356 353.5h1M401 353.5h1M242 559.5h7M252 559.5h7M247 558.5h1M253 558.5h1M247 554.5h1M253 554.5h1M248 553.5h5M242 563.5h17M282 221.5h1M292 221.5h1M539 221.5h1M286 220.5h1M295 220.5h1M540 220.5h1M546 220.5h1M552 220.5h1M302 216.5h1M310 216.5h1M342 216.5h1M542 216.5h1M548 216.5h1M554 216.5h1M294 218.5h1M301 218.5h1M304 218.5h1M343 218.5h1M544 218.5h1M550 218.5h1M313 215.5h1M555 215.5h1M338 205.5h1M343 205.5h1M346 205.5h1M555 205.5h1M340 206.5h1M542 206.5h1M548 206.5h1M554 206.5h1M745 206.5h1M751 206.5h1M322 210.5h1M328 210.5h1M339 210.5h1M540 210.5h1M546 210.5h1M552 210.5h1M330 208.5h1M334 208.5h1M338 208.5h1M544 208.5h1M550 208.5h1M747 208.5h3M318 211.5h1M325 211.5h1M340 211.5h1M539 211.5h1M318 161.5h1M413 161.5h3M417 161.5h3M411 164.5h1M421 164.5h1M320 165.5h1M410 165.5h1M422 165.5h1M410 155.5h1M422 155.5h1M415 171.5h3M321 167.5h1M415 167.5h1M417 167.5h1M744 167.5h1M748 167.5h2M752 167.5h1M329 186.5h1M397 186.5h1M193 445.5h2M196 445.5h2M192 444.5h1M198 444.5h1M192 438.5h1M198 438.5h1M324 438.5h1M193 437.5h5M299 437.5h1M323 437.5h1M191 449.5h4M196 449.5h4M294 449.5h1M212 421.5h1M309 421.5h1M289 485.5h4M294 485.5h4M291 481.5h2M294 481.5h2M290 480.5h1M296 480.5h1M290 474.5h1M296 474.5h1M291 473.5h5M290 472.5h1M296 472.5h1M289 471.5h1M297 471.5h1M275 382.5h1M413 382.5h1M274 381.5h1M413 381.5h1M270 380.5h1M273 380.5h1M338 380.5h1M412 380.5h1M272 379.5h1M412 379.5h1M271 378.5h1M411 378.5h1M267 377.5h1M270 377.5h1M340 377.5h1M411 377.5h1M268 375.5h1M410 375.5h1M264 374.5h1M267 374.5h1M342 374.5h1M410 374.5h1M267 373.5h1M409 373.5h1M266 372.5h1M409 372.5h1M259 368.5h1M262 368.5h1M346 368.5h1M407 368.5h1M261 367.5h1M407 367.5h1M260 366.5h1M406 366.5h1M256 365.5h1M260 365.5h1M348 365.5h1M406 365.5h1M256 361.5h1M404 361.5h1M255 360.5h1M404 360.5h1M250 359.5h1M254 359.5h1M352 359.5h1M403 359.5h1M253 358.5h1M403 358.5h1M250 354.5h1M401 354.5h1M248 352.5h1M400 352.5h1M247 351.5h1M400 351.5h1M239 347.5h1M244 347.5h1M360 347.5h1M398 347.5h1M243 346.5h1M398 346.5h1M242 345.5h1M397 345.5h1M236 344.5h1M241 344.5h1M362 344.5h1M397 344.5h1M237 340.5h1M395 340.5h1M236 339.5h1M395 339.5h1M231 338.5h1M236 338.5h1M366 338.5h1M394 338.5h1M235 337.5h1M394 337.5h1M231 333.5h1M392 333.5h1M225 332.5h1M230 332.5h1M370 332.5h1M392 332.5h1M229 331.5h1M391 331.5h1M228 330.5h1M391 330.5h1M220 326.5h1M225 326.5h1M374 326.5h1M389 326.5h1M224 325.5h1M389 325.5h1M223 324.5h1M388 324.5h1M217 323.5h1M222 323.5h1M376 323.5h1M388 323.5h1M221 322.5h1M387 322.5h1M221 321.5h1M387 321.5h1M211 317.5h1M217 317.5h1M380 317.5h1M385 317.5h1M216 316.5h1M385 316.5h1M215 315.5h1M384 315.5h1M208 314.5h1M214 314.5h1M382 314.5h1M384 314.5h1M748 314.5h1M211 310.5h1M382 310.5h1M210 309.5h1M382 309.5h1M747 309.5h1M749 309.5h1M203 308.5h1M209 308.5h1M381 308.5h1M386 308.5h1M208 307.5h1M381 307.5h1M205 303.5h1M379 303.5h1M197 302.5h1M204 302.5h1M379 302.5h1M390 302.5h1M203 301.5h1M378 301.5h1M202 300.5h1M378 300.5h1M192 296.5h1M198 296.5h1M376 296.5h1M394 296.5h1M197 295.5h1M376 295.5h1M197 294.5h1M375 294.5h1M189 293.5h1M196 293.5h1M375 293.5h1M396 293.5h1M192 289.5h1M373 289.5h1M191 288.5h1M373 288.5h1M183 287.5h1M190 287.5h1M372 287.5h1M401 287.5h1M189 286.5h1M372 286.5h1M186 282.5h1M370 282.5h1M178 281.5h1M185 281.5h1M370 281.5h1M405 281.5h1M184 280.5h1M369 280.5h1M183 279.5h1M369 279.5h1M172 275.5h1M180 275.5h1M367 275.5h1M409 275.5h1M179 274.5h1M367 274.5h1M178 273.5h1M366 273.5h1M169 272.5h1M177 272.5h1M366 272.5h1M411 272.5h1M746 272.5h2M749 272.5h2M174 268.5h1M364 268.5h1M173 267.5h1M364 267.5h1M164 266.5h1M172 266.5h1M363 266.5h1M415 266.5h1M747 266.5h3M171 265.5h1M363 265.5h1M167 261.5h1M361 261.5h1M747 261.5h1M749 261.5h1M166 260.5h1M361 260.5h1M419 260.5h1M166 259.5h1M169 259.5h1M360 259.5h1M165 258.5h1M172 258.5h1M360 258.5h1M166 254.5h1M187 254.5h1M358 254.5h1M423 254.5h1M170 253.5h1M190 253.5h1M358 253.5h1M174 252.5h1M193 252.5h1M357 252.5h1M196 251.5h1M357 251.5h1M425 251.5h1M190 247.5h1M208 247.5h1M355 247.5h1M194 246.5h1M211 246.5h1M355 246.5h1M198 245.5h1M214 245.5h1M354 245.5h1M429 245.5h1M202 244.5h1M217 244.5h1M354 244.5h1M214 240.5h1M232 240.5h1M352 240.5h1M218 239.5h1M235 239.5h1M352 239.5h1M222 238.5h1M238 238.5h1M351 238.5h1M226 237.5h1M241 237.5h1M351 237.5h1M253 233.5h1M349 233.5h1M242 232.5h1M256 232.5h1M349 232.5h1M246 231.5h1M259 231.5h1M348 231.5h1M250 230.5h1M262 230.5h1M265 230.5h1M348 230.5h1M266 226.5h1M277 226.5h1M346 226.5h1M270 225.5h1M280 225.5h1M346 225.5h1M283 224.5h1M345 224.5h1M274 223.5h1M286 223.5h1M345 223.5h1M290 219.5h1M298 219.5h1M343 219.5h1M298 217.5h1M307 217.5h1M342 217.5h1M314 212.5h1M322 212.5h1M340 212.5h1M326 209.5h1M331 209.5h1M339 209.5h1M746 209.5h1M750 209.5h1M334 207.5h1M338 207.5h1M746 207.5h1M750 207.5h1M336 203.5h1M346 203.5h1M352 203.5h1M336 202.5h1M350 202.5h1M355 202.5h1M335 201.5h1M354 201.5h1M358 201.5h1M335 200.5h1M358 200.5h1M361 200.5h1M333 196.5h1M370 196.5h1M373 196.5h1M333 195.5h1M374 195.5h1M376 195.5h1M332 194.5h1M378 194.5h2M332 193.5h1M382 193.5h1M330 189.5h1M330 188.5h1M329 187.5h1M327 182.5h1M327 181.5h1M326 180.5h1M326 179.5h1M324 175.5h1M324 174.5h1M751 174.5h1M323 173.5h1M323 172.5h1M321 168.5h1M749 168.5h1M752 168.5h1M320 166.5h1M748 166.5h1M750 166.5h2M318 160.5h1M317 159.5h1M317 158.5h1M278 389.5h1M281 389.5h1M332 389.5h1M317 430.5h1M226 242.5h1M431 242.5h1M297 440.5h1M326 440.5h1M301 434.5h1M320 434.5h2M303 431.5h1M318 431.5h1M305 428.5h1M315 428.5h1M307 425.5h1M312 425.5h2M309 422.5h2M307 419.5h1M311 419.5h1M304 416.5h2M313 416.5h1M301 413.5h2M315 413.5h1M298 410.5h2M317 410.5h1M295 407.5h1M297 407.5h1M319 407.5h1M292 404.5h1M294 404.5h1M321 404.5h1M290 401.5h2M323 401.5h1M284 395.5h1M286 395.5h1M327 395.5h1M281 392.5h1M283 392.5h1M330 392.5h1M276 386.5h1M278 386.5h1M334 386.5h1M273 383.5h1M275 383.5h1M336 383.5h1M262 371.5h1M265 371.5h1M344 371.5h1M253 362.5h1M257 362.5h1M350 362.5h1M248 356.5h1M252 356.5h1M354 356.5h1M242 350.5h1M246 350.5h1M358 350.5h1M234 341.5h1M238 341.5h1M364 341.5h1M228 335.5h1M233 335.5h1M368 335.5h1M222 329.5h1M228 329.5h1M372 329.5h1M214 320.5h1M220 320.5h1M378 320.5h1M206 311.5h1M212 311.5h1M384 311.5h1M745 311.5h1M751 311.5h1M200 305.5h1M206 305.5h1M388 305.5h1M186 290.5h1M193 290.5h1M399 290.5h1M181 284.5h1M188 284.5h1M403 284.5h1M175 278.5h1M182 278.5h1M407 278.5h1M167 269.5h1M174 269.5h1M413 269.5h1M161 263.5h1M169 263.5h1M417 263.5h1M746 263.5h2M749 263.5h2M164 257.5h1M175 257.5h1M421 257.5h1M747 257.5h3M186 248.5h1M205 248.5h1M427 248.5h1M163 256.5h1M178 256.5h1M181 256.5h1M746 256.5h1M750 256.5h1M162 255.5h1M184 255.5h1M178 250.5h1M199 250.5h1M182 249.5h1M202 249.5h1M206 243.5h1M220 243.5h1M223 243.5h1M210 241.5h1M229 241.5h1M230 236.5h1M244 236.5h1M234 235.5h1M247 235.5h1M238 234.5h1M250 234.5h1M254 229.5h1M268 229.5h1M258 228.5h1M271 228.5h1M262 227.5h1M274 227.5h1M278 222.5h1M289 222.5h1M306 214.5h1M316 214.5h1M747 214.5h3M310 213.5h1M319 213.5h1M746 213.5h1M750 213.5h1M342 204.5h1M349 204.5h1M362 199.5h1M364 199.5h1M366 198.5h2M370 197.5h1M385 192.5h2M388 192.5h1M390 191.5h2M325 439.5h1M322 436.5h1M322 435.5h1M320 433.5h1M319 432.5h1M316 429.5h1M314 427.5h1M314 426.5h1M312 424.5h1M311 423.5h1M308 420.5h1M304 415.5h1M303 414.5h1M301 412.5h1M300 411.5h1M299 409.5h1M298 408.5h1M296 406.5h1M295 405.5h1M293 403.5h1M292 402.5h1M291 400.5h1M290 399.5h1M288 397.5h1M285 394.5h1M284 393.5h1M283 391.5h1M282 390.5h1M280 388.5h1M279 387.5h1M277 385.5h1M276 384.5h1M269 376.5h1M264 370.5h1M263 369.5h1M259 364.5h1M258 363.5h1M252 357.5h1M251 355.5h1M245 349.5h1M244 348.5h1M240 343.5h1M239 342.5h1M234 336.5h1M232 334.5h1M227 328.5h1M226 327.5h1M219 319.5h1M218 318.5h1M213 313.5h1M747 313.5h1M749 313.5h1M213 312.5h1M747 312.5h1M749 312.5h1M207 306.5h1M745 306.5h1M751 306.5h1M205 304.5h1M200 298.5h1M199 297.5h1M195 292.5h1M194 291.5h1M189 285.5h1M187 283.5h1M182 277.5h1M181 276.5h1M176 271.5h1M175 270.5h1M747 270.5h1M749 270.5h1M170 264.5h1M168 262.5h1M744 126.5h1M746 126.5h1M748 126.5h1M750 128.5h1M750 169.5h2M751 170.5h1M195.5 445v9M377.5 297v3M99.5 121v13M105.5 121v13M246.5 555v3M254.5 555v3M350.5 234v3M541.5 207v3M541.5 217v3M543.5 205v3M543.5 215v3M545.5 209v3M545.5 219v3M547.5 207v3M547.5 217v3M549.5 205v3M549.5 215v3M551.5 209v3M551.5 219v3M553.5 207v3M553.5 217v3M416.5 159v9M418.5 168v3M420.5 157v7M414.5 168v3M412.5 157v7M191.5 439v5M199.5 439v5M293.5 481v7M289.5 475v5M297.5 475v5M408.5 369v3M405.5 362v3M402.5 355v3M399.5 348v3M396.5 341v3M393.5 334v3M390.5 327v3M386.5 318v3M383.5 311v3M380.5 304v3M374.5 290v3M371.5 283v3M368.5 276v3M365.5 269v3M362.5 262v3M359.5 255v3M356.5 248v3M353.5 241v3M347.5 227v3M344.5 220v3M341.5 213v3M337.5 204v4M334.5 197v3M331.5 190v3M328.5 183v3M325.5 176v3M322.5 169v3M319.5 162v3M306.5 417v3M745.5 127v7M745.5 166v5M745.5 210v3M746.5 171v3M746.5 258v3M746.5 267v3M746.5 307v4M747.5 127v7M747.5 168v3M748.5 261v4M748.5 270v5M748.5 308v5M749.5 127v6M750.5 258v3M750.5 267v3M750.5 307v4M751.5 127v6M751.5 210v3M752.5 171v3"/>
<path stroke="#0000ff" d="M308 299.5h1M298 311.5h1M45 251.5h3M345 251.5h1M35 245.5h1M45 245.5h3M125 245.5h1M131 245.5h2M350 245.5h1M34 250.5h1M38 250.5h1M44 250.5h1M48 250.5h1M34 246.5h1M44 246.5h1M48 246.5h1M126 246.5h5M746 246.5h3M35 255.5h3M47 255.5h1M35 249.5h3M34 254.5h1M38 254.5h1M48 254.5h1M156 254.5h1M343 254.5h1M746 254.5h3M33 247.5h1M745 247.5h1M749 247.5h2M36 244.5h3M44 244.5h1M124 244.5h1M133 244.5h1M39 243.5h5M125 243.5h1M134 243.5h1M49 253.5h1M745 253.5h1M749 253.5h2M38 256.5h1M44 256.5h3M39 257.5h5M341 257.5h1M305 302.5h1M452 384.5h2M459 384.5h2M457 222.5h1M459 222.5h1M462 222.5h2M465 222.5h2M469 222.5h1M471 222.5h1M377 539.5h1M381 539.5h1M385 539.5h1M378 540.5h1M380 540.5h1M382 540.5h1M384 540.5h1M386 540.5h1M388 554.5h1M391 554.5h1M389 555.5h2M391 551.5h1M393 551.5h1M463 101.5h4M468 101.5h7M476 101.5h4M463 93.5h1M479 93.5h1M464 94.5h1M478 94.5h1M465 95.5h1M477 95.5h1M466 96.5h1M476 96.5h1M466 97.5h1M476 97.5h1M466 105.5h1M476 105.5h1M466 106.5h1M476 106.5h1M465 107.5h1M477 107.5h1M464 108.5h1M478 108.5h1M463 109.5h1M479 109.5h1M451 382.5h1M461 382.5h1M242 383.5h1M451 383.5h1M461 383.5h1M454 385.5h2M457 385.5h2M237 389.5h1M452 389.5h4M457 389.5h4M455 381.5h3M247 377.5h1M455 377.5h3M251 371.5h1M430 371.5h1M459 225.5h1M469 225.5h1M459 226.5h1M469 226.5h1M364 227.5h1M460 227.5h2M467 227.5h2M462 228.5h2M465 228.5h2M124 232.5h1M133 232.5h1M460 232.5h4M465 232.5h4M127 240.5h1M436 240.5h1M126 230.5h5M362 230.5h1M126 242.5h1M135 242.5h1M352 242.5h1M127 241.5h1M135 241.5h1M125 231.5h1M131 231.5h2M125 233.5h1M134 233.5h1M359 233.5h1M126 234.5h1M135 234.5h1M127 235.5h1M135 235.5h1M127 236.5h1M357 236.5h1M218 413.5h1M221 410.5h1M223 407.5h1M228 401.5h1M230 398.5h1M232 395.5h1M235 392.5h1M239 386.5h1M244 380.5h1M249 374.5h1M254 368.5h1M258 362.5h1M261 359.5h1M263 356.5h1M265 353.5h1M268 350.5h1M270 347.5h1M272 344.5h1M275 341.5h1M277 338.5h1M279 335.5h1M282 332.5h1M746 332.5h2M749 332.5h2M284 329.5h1M746 329.5h1M750 329.5h1M286 326.5h1M748 326.5h1M289 323.5h1M291 320.5h1M747 320.5h1M749 320.5h1M294 317.5h1M744 317.5h1M747 317.5h1M749 317.5h1M752 317.5h1M296 314.5h1M301 308.5h1M303 305.5h1M310 296.5h1M312 293.5h1M315 290.5h1M317 287.5h1M319 284.5h1M322 281.5h1M324 278.5h1M326 275.5h1M329 272.5h1M331 269.5h1M333 266.5h1M336 263.5h1M338 260.5h1M348 248.5h1M746 248.5h1M750 248.5h1M355 239.5h1M366 224.5h1M745 224.5h1M752 224.5h1M369 221.5h1M371 218.5h1M373 215.5h1M376 212.5h1M378 209.5h1M380 206.5h1M383 203.5h1M385 200.5h1M388 197.5h1M390 194.5h1M392 191.5h1M744 141.5h2M747 141.5h1M749 141.5h1M751 141.5h2M747 138.5h3M744 143.5h9M744 184.5h1M747 184.5h1M750 184.5h1M745 183.5h1M747 183.5h2M750 183.5h2M745 182.5h2M748 182.5h2M751 182.5h1M746 181.5h1M749 181.5h1M752 181.5h1M746 176.5h1M749 176.5h1M752 176.5h1M745 177.5h2M748 177.5h2M751 177.5h1M745 178.5h1M747 178.5h2M750 178.5h2M744 179.5h1M747 179.5h1M750 179.5h1M746 217.5h1M748 217.5h2M751 217.5h1M745 216.5h1M752 216.5h1M746 223.5h1M748 223.5h2M751 223.5h1M746 252.5h1M750 252.5h1M746 322.5h2M749 322.5h2M746 319.5h1M750 319.5h1M747 327.5h1M749 327.5h1M748 328.5h1M747 330.5h1M749 330.5h1M49.5 247v3M43.5 247v3M39.5 251v3M33.5 251v3M379.5 541v13M383.5 541v13M387.5 541v13M392.5 550v4M464.5 220v17M467.5 98v7M470.5 220v5M475.5 98v7M450.5 377v5M462.5 377v5M454.5 378v3M456.5 385v9M458.5 220v5M458.5 378v3M128.5 237v3M136.5 236v5M747.5 217v7M747.5 249v3M746.5 139v3M745.5 316v3M745.5 326v3M748.5 316v9M748.5 330v5M750.5 139v3M750.5 217v7M751.5 249v3M751.5 316v3M751.5 326v3"/>
<path stroke="#ffff00" d="M317 150.5h1M211 59.5h5M211 47.5h5M209 58.5h2M216 58.5h2M209 48.5h2M216 48.5h2M208 57.5h1M218 57.5h1M208 49.5h1M218 49.5h1M208 56.5h1M218 56.5h1M208 50.5h1M218 50.5h1M207 43.5h1M219 43.5h1M208 44.5h1M218 44.5h1M208 45.5h1M218 45.5h1M209 46.5h2M216 46.5h2M119 489.5h1M123 489.5h1M127 489.5h1M120 490.5h1M122 490.5h1M124 490.5h1M126 490.5h1M128 490.5h1M130 502.5h1M132 502.5h1M131 503.5h1M130 504.5h1M132 504.5h1M129 505.5h1M133 505.5h1M130 494.5h1M131 493.5h1M132 492.5h1M549 342.5h1M559 342.5h1M550 341.5h1M558 341.5h1M560 341.5h1M564 341.5h1M552 349.5h1M554 349.5h1M564 349.5h1M556 343.5h1M558 343.5h1M559 344.5h1M560 345.5h1M564 345.5h1M561 346.5h3M561 340.5h3M562 347.5h1M563 348.5h1M564 355.5h1M563 356.5h1M156 409.5h4M161 409.5h4M161 415.5h2M163 414.5h1M167 414.5h1M164 413.5h3M167 418.5h1M167 422.5h1M168 423.5h1M185 396.5h1M161 257.5h1M161 259.5h1M160 261.5h1M752 124.5h1M745 123.5h1M751 123.5h1M744 122.5h1M746 122.5h1M750 122.5h1M746 121.5h1M750 121.5h1M746 117.5h1M750 117.5h1M747 116.5h3M744 164.5h1M745 163.5h1M749 163.5h1M746 162.5h1M748 162.5h1M747 161.5h1M746 160.5h1M748 160.5h1M745 159.5h1M749 159.5h1M750 158.5h1M751 157.5h1M750 156.5h2M745 196.5h2M750 196.5h2M744 197.5h1M752 197.5h1M744 198.5h1M752 198.5h1M745 199.5h1M751 199.5h1M745 297.5h2M748 297.5h2M748 300.5h1M751 300.5h1M749 299.5h2M751 301.5h1M750 302.5h1M750 303.5h1M751 304.5h1M219.5 51v5M207.5 51v5M121.5 491v13M125.5 491v13M129.5 491v11M133.5 491v11M551.5 340v9M553.5 350v5M555.5 344v5M557.5 340v3M565.5 342v3M565.5 350v5M160.5 407v15M166.5 419v3M168.5 415v3M752.5 156v3M751.5 118v3M749.5 197v3M748.5 200v5M747.5 197v3M747.5 296v8M745.5 118v3"/>
<path stroke="#009696" d="M435 193.5h2M446 193.5h2M434 194.5h1M448 194.5h1M433 195.5h1M449 195.5h1M434 196.5h1M436 196.5h1M446 196.5h1M448 196.5h1M435 197.5h1M447 197.5h1M436 190.5h1M446 190.5h1M436 184.5h1M446 184.5h1M437 183.5h1M445 183.5h1M438 182.5h1M444 182.5h1M439 181.5h5M417 207.5h1M745 342.5h1M751 342.5h1M744 343.5h1M752 343.5h1M745 344.5h1M751 344.5h1M746 337.5h1M750 337.5h1M747 336.5h3M437.5 191v5M435.5 185v5M445.5 191v5M447.5 185v5M746.5 341v3M745.5 338v3M750.5 341v3M751.5 338v3"/>
<text class="hn" transform="translate(95.5 349.0) scale(0.88 1)" fill="#ff0000">1</text>
<text class="hn" transform="translate(136.5 434.0) scale(0.88 1)" fill="#ffff00">2</text>
<text class="hn" transform="translate(220.5 498.0) scale(0.88 1)" fill="#00ff00">3</text>
<text class="hn" transform="translate(339.5 510.0) scale(0.88 1)" fill="#0000ff">4</text>
<text class="hn" transform="translate(449.5 451.0) scale(0.88 1)" fill="#ff0000">5</text>
<text class="hn" transform="translate(504.5 354.0) scale(0.88 1)" fill="#ffff00">6</text>
<text class="hn" transform="translate(505.5 259.0) scale(0.88 1)" fill="#00ff00">7</text>
<text class="hn" transform="translate(464.5 174.0) scale(0.88 1)" fill="#0000ff">8</text>
<text class="hn" transform="translate(380.5 110.0) scale(0.88 1)" fill="#ff0000">9</text>
<text class="hn" transform="translate(261.4 98.0) scale(0.88 1)" fill="#ffff00">10</text>
<text class="hn" transform="translate(151.4 157.0) scale(0.88 1)" fill="#00ff00">11</text>
<text class="hn" transform="translate(96.4 254.0) scale(0.88 1)" fill="#0000ff">12</text>
<text class="lb" transform="translate(110.9 307.5) scale(0.33 1)" x="0 20.6 39" fill="#ff0000" stroke="#ff0000">Asc</text>
<text class="lb" transform="translate(311.2 129.5) scale(0.48 1)" x="0 22.6" fill="#ffff00" stroke="#ffff00">MC</text>
</svg>
<pre><span style="color:#ffffff">Astrolog 5.40</span>
"Anonymous"
Tue October 30, 2007
10:29pm (ST +8:00 GMT)
"Taiwan"
121°44E 25°08N
Regiomontanus houses.
Tropical, Geocentric.
Julian Day = 2454404.1035

<span style="color:#ff0000"> 1st house: </span><span style="color:#0000ff">25Can53</span>
<span style="color:#ffff00"> 2nd house: </span><span style="color:#ff0000">21Leo08</span>
<span style="color:#00ff00"> 3rd house: </span><span style="color:#ffff00">17Vir40</span>
<span style="color:#0000ff"> 4th house: </span><span style="color:#00ff00">18Lib59</span>
<span style="color:#ff0000"> 5th house: </span><span style="color:#0000ff">24Sco29</span>
<span style="color:#ffff00"> 6th house: </span><span style="color:#ff0000">27Sag51</span>
<span style="color:#00ff00"> 7th house: </span><span style="color:#ffff00">25Cap53</span>
<span style="color:#0000ff"> 8th house: </span><span style="color:#00ff00">21Aqu08</span>
<span style="color:#ff0000"> 9th house: </span><span style="color:#0000ff">17Pis40</span>
<span style="color:#ffff00">10th house: </span><span style="color:#ff0000">18Ari59</span>
<span style="color:#00ff00">11th house: </span><span style="color:#ffff00">24Tau29</span>
<span style="color:#0000ff">12th house: </span><span style="color:#00ff00">27Gem51</span>

<span style="color:#ff0000"> Sun: </span><span style="color:#0000ff"> 6Sco47</span>  - 0°00'
<span style="color:#0000ff">Moon: </span><span style="color:#0000ff"> 8Can05</span>  + 4°16'
<span style="color:#00ff00">Merc: </span><span style="color:#00ff00">23Lib54</span><span style="color:#ffffff">R</span> + 1°03'
<span style="color:#00ff00">Venu: </span><span style="color:#ffff00">20Vir20</span>  + 0°20'
<span style="color:#ff0000">Mars: </span><span style="color:#0000ff">10Can50</span>  + 0°55'
<span style="color:#ff0000">Jupi: </span><span style="color:#ff0000">19Sag22</span>  + 0°17'
<span style="color:#ffff00">Satu: </span><span style="color:#ffff00"> 6Vir19</span>  + 1°26'
<span style="color:#00ff00">Uran: </span><span style="color:#0000ff">15Pis02</span><span style="color:#ffffff">R</span> - 0°48'
<span style="color:#0000ff">Nept: </span><span style="color:#00ff00">19Aqu15</span><span style="color:#ffffff">R</span> - 0°17'
<span style="color:#0000ff">Plut: </span><span style="color:#ff0000">27Sag02</span>  + 6°27'
<span style="color:#009696">Node: </span><span style="color:#0000ff"> 3Pis39</span><span style="color:#ffffff">R</span> + 0°00'

Fire: 3, Earth: 2,
Air : 2, Water: 6
Car: 5, Fix: 2, Mut: 6
Yang: 5, Yin: 8
M: 5, N: 6, A: 4, D: 7
Ang: 3, Suc: 5, Cad: 3
Learn: 6, Share: 7</pre>
</body></html>
